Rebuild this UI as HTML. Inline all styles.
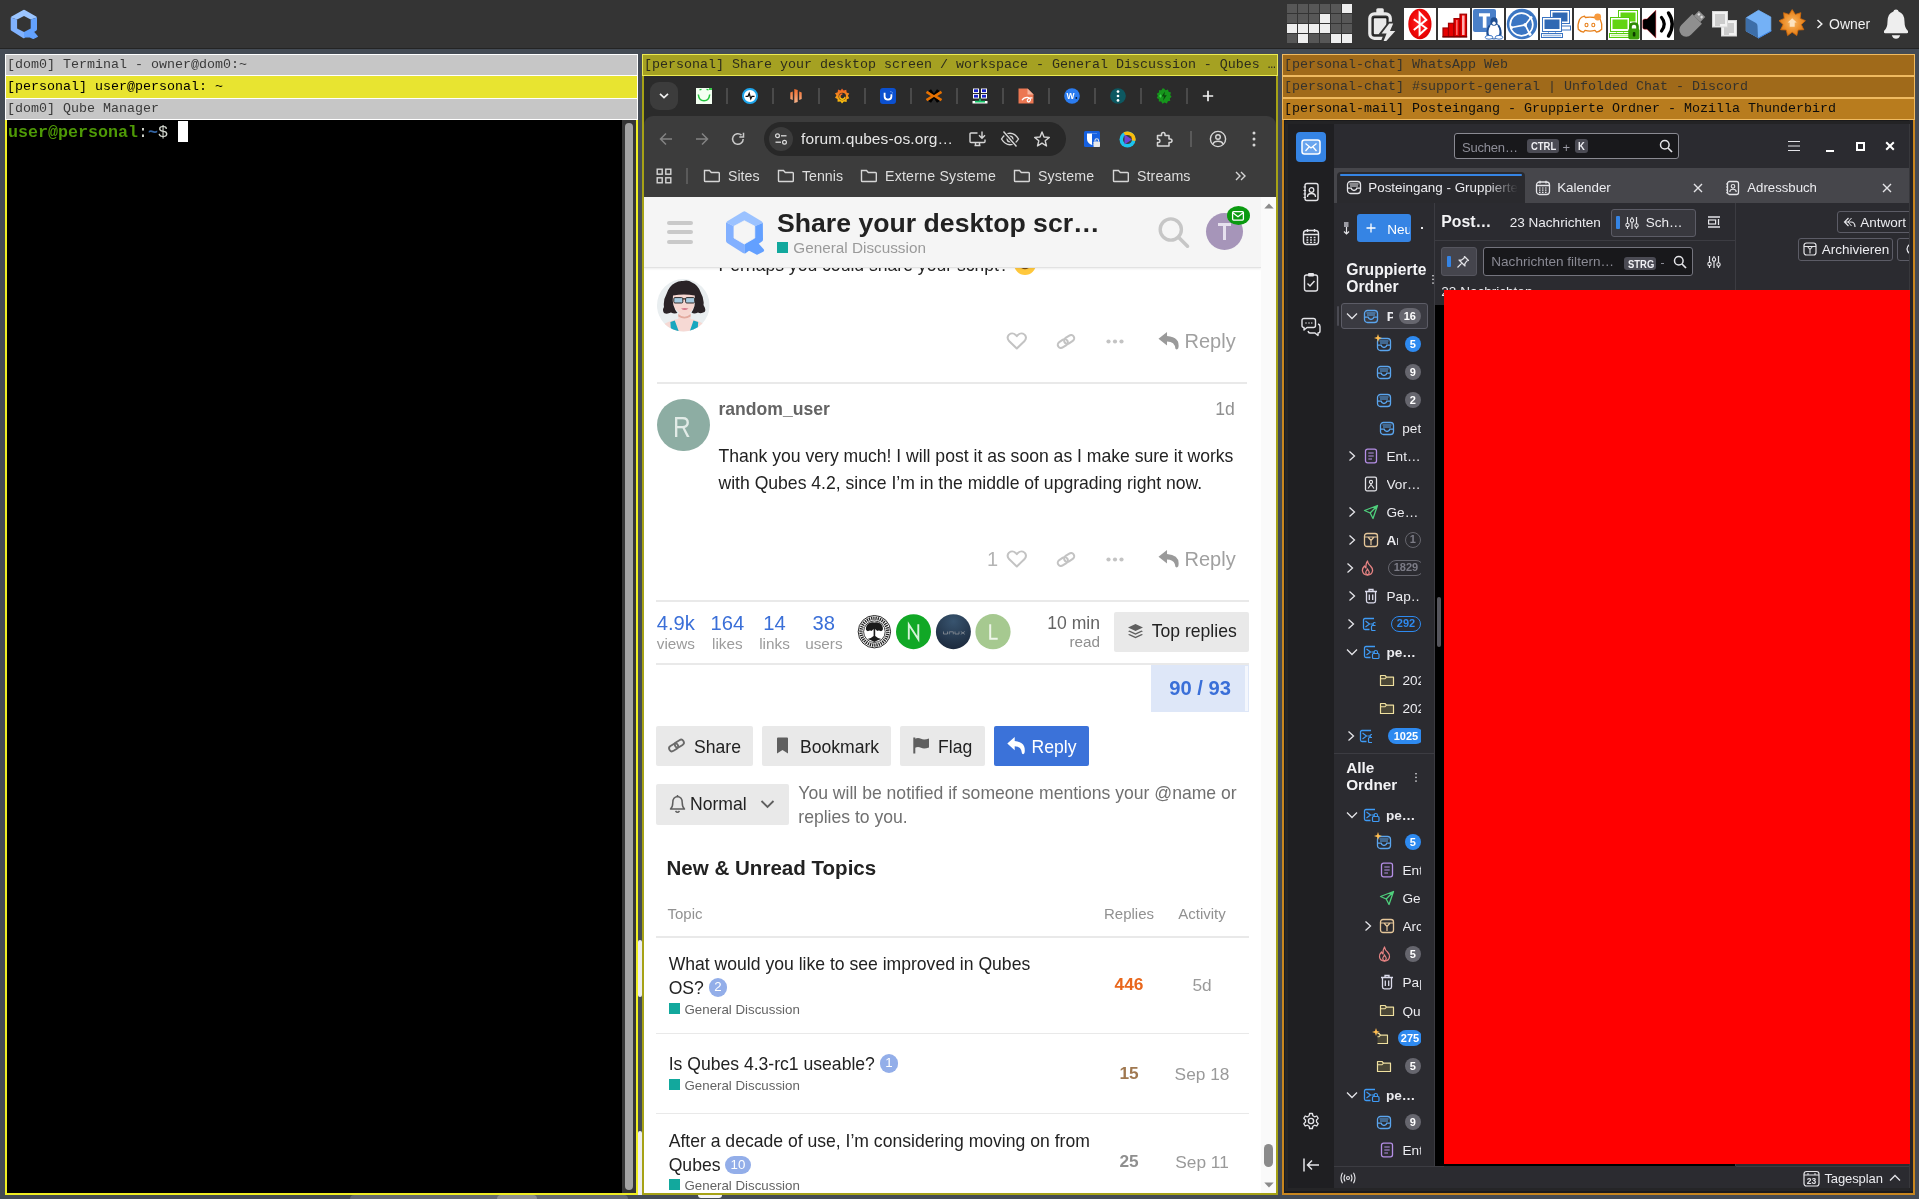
<!DOCTYPE html>
<html><head><meta charset="utf-8"><title>desktop</title>
<style>
*{box-sizing:border-box;margin:0;padding:0}
html,body{width:1919px;height:1199px;overflow:hidden;background:#444b54;font-family:"Liberation Sans",sans-serif}
.abs,.abs *{position:absolute}
.abs{position:absolute}
#panel,#w1,#w2,#w3{will-change:transform}
.mono{font-family:"Liberation Mono",monospace}
.t{white-space:nowrap;line-height:1}
svg{position:absolute;overflow:visible}
/* ---------- top panel ---------- */
#panel{left:0;top:0;width:1919px;height:49px;background:#343434;border-bottom:1px solid #242424}
#grid i{width:10px;height:9px;display:block}
#grid i.d{background:#575757}#grid i.l{background:#eeeeee}
svg.tr{top:8px;width:32px;height:32px}
/* ---------- title bars ---------- */
.tb{position:absolute;height:22px;font-family:"Liberation Mono",monospace;font-size:13.33px;line-height:20px;white-space:nowrap;overflow:hidden;padding-left:1px;border:1px solid #fff}
i.ts{display:block;top:12px;width:1.500px;height:16px;background:#4a4a4a}
svg.fv{top:12px;width:16px;height:16px}
svg.fo{top:93px;width:18px;height:14px}
.bm{top:91px;font-size:14.200px;line-height:18px;color:#dedede}
/* ---------- window 1 ---------- */
#w1{left:5px;top:54px;width:633px;height:1141px}
/* ---------- window 2 ---------- */
#w2{left:642px;top:54px;width:636px;height:1141px}
/* ---------- window 3 ---------- */
#w3{left:1282px;top:54px;width:633px;height:1141px}
</style></head>
<body>
<!-- wallpaper highlights visible in gaps -->
<div class="abs" style="left:638px;top:940px;width:4px;height:57px;background:#ececf0;border-radius:2px"></div>
<div class="abs" style="left:638px;top:1131px;width:4px;height:64px;background:#ececf0;border-radius:2px 2px 0 0"></div>
<div class="abs" style="left:350px;top:1195px;width:278px;height:4px;background:#666b73;border-radius:60px 60px 0 0"></div>
<div class="abs" style="left:497px;top:1195px;width:40px;height:4px;background:#909295;border-radius:14px 14px 0 0"></div>
<div class="abs" style="left:698px;top:1195px;width:24px;height:2.500px;background:#f4f4f6;border-radius:0 0 12px 12px"></div>
<!-- PANEL -->
<div id="panel" class="abs">
<!-- qubes logo -->
<svg style="left:0;top:0" width="48" height="48" viewBox="0 0 48 48">
<defs><mask id="qm" maskUnits="userSpaceOnUse" x="0" y="0" width="48" height="48">
<path d="M24 11.3 L35.400 17.800 L35.400 29.300 L24 35.800 L23.800 36.600 L12.300 29.500 L12.300 17.800 Z" fill="#fff" stroke="#fff" stroke-width="3.2" stroke-linejoin="round"/>
<path d="M33.6 32.200 L37.300 36.500 L33.300 38.500 L29.500 36.600 L25 36.800 L30 31 Z" fill="#fff" stroke="#fff" stroke-width="1.2" stroke-linejoin="round"/>
<path d="M24 16 L30.700 19.400 L30.700 28.500 L24 31.900 L17.100 28.500 L17.100 19.400 Z" fill="#000"/>
</mask></defs>
<g mask="url(#qm)">
<path d="M0 0 H48 V14 L30.700 19.400 L24 23 L17.100 19.400 L0 14 Z" fill="#9bc5ff"/>
<path d="M0 14 L17.100 19.400 L24 23 V48 H0 Z" fill="#80b2ff"/>
<path d="M48 14 L30.700 19.400 L24 23 V48 H48 Z" fill="#63a2ff"/>
</g>
</svg>
<!-- workspace grid -->
<div id="grid" style="left:1287px;top:4px;width:66px;height:40px">
<i class="d" style="left:0;top:0"></i><i class="d" style="left:11px;top:0"></i><i class="d" style="left:22px;top:0"></i><i class="d" style="left:33px;top:0"></i><i class="d" style="left:44px;top:0"></i><i class="l" style="left:55px;top:0"></i>
<i class="d" style="left:0;top:10px"></i><i class="d" style="left:11px;top:10px"></i><i class="d" style="left:22px;top:10px"></i><i class="l" style="left:33px;top:10px"></i><i class="d" style="left:44px;top:10px"></i><i class="d" style="left:55px;top:10px"></i>
<i class="l" style="left:0;top:20px"></i><i class="l" style="left:11px;top:20px"></i><i class="l" style="left:22px;top:20px"></i><i class="l" style="left:33px;top:20px"></i><i class="d" style="left:44px;top:20px"></i><i class="d" style="left:55px;top:20px"></i>
<i class="d" style="left:0;top:30px"></i><i class="l" style="left:11px;top:30px"></i><i class="d" style="left:22px;top:30px"></i><i class="d" style="left:33px;top:30px"></i><i class="l" style="left:44px;top:30px"></i><i class="l" style="left:55px;top:30px"></i>
</div>
<!-- battery -->
<svg style="left:1366px;top:6px" width="32" height="36" viewBox="0 0 32 36">
<rect x="10.3" y="2.300" width="7.5" height="6" rx="1.5" fill="#e9e9e9"/>
<rect x="3.800" y="7.800" width="20.5" height="24.5" rx="4.5" fill="none" stroke="#e9e9e9" stroke-width="3.200"/>
<rect x="6.600" y="11" width="15" height="18.5" rx="1.500" fill="#1c1c1c"/>
<rect x="7.800" y="12.300" width="12.600" height="16" rx="0.800" fill="#e9e9e9"/>
<path d="M23 17 L14 28.500 H19 L16 36 H20.500 L31 24 H25.500 L28.500 17 Z" fill="#343434" stroke="#343434" stroke-width="2.600" stroke-linejoin="round"/>
<path d="M23.200 17.600 L15.600 27.500 H20.600 L17.600 35 H20.300 L29.300 25 H24 L27.200 17.600 Z" fill="#e9e9e9"/>
</svg>
<!-- tray: bluetooth -->
<svg class="tr" style="left:1404px" viewBox="0 0 32 32"><rect width="32" height="32" fill="#fff"/>
<defs><radialGradient id="btg" cx="0.5" cy="0.45" r="0.6"><stop offset="0" stop-color="#ff2a2a"/><stop offset="0.7" stop-color="#ee0606"/><stop offset="1" stop-color="#d40000"/></radialGradient></defs>
<ellipse cx="15.900" cy="16" rx="11.600" ry="15.300" fill="url(#btg)"/>
<path d="M9.800 11.300 L22.300 20.300 L15.600 26.500 V4.800 L22.300 11.800 L9.800 22" fill="none" stroke="#fff" stroke-width="2"/>
</svg>
<!-- tray: signal -->
<svg class="tr" style="left:1438px" viewBox="0 0 32 32"><rect width="32" height="32" fill="#fff"/>
<defs><linearGradient id="sg" x1="0" x2="1"><stop offset="0" stop-color="#ff1a1a"/><stop offset="0.55" stop-color="#ff8a8a"/><stop offset="1" stop-color="#d80000"/></linearGradient></defs>
<g fill="#e60000" stroke="#a00000" stroke-width="1.200"><rect x="5" y="20" width="5.500" height="8.500"/><rect x="10.500" y="15.300" width="5.500" height="13.200"/><rect x="16" y="10.600" width="6" height="17.900"/><rect x="22" y="6.200" width="6.500" height="22.300"/></g>
<rect x="24" y="7.500" width="2.600" height="19.500" fill="#ffb0b0"/><rect x="18" y="12" width="1.600" height="15" fill="#ff6a6a"/>
<rect x="4.400" y="28.300" width="24.800" height="1.300" fill="#700000"/>
</svg>
<!-- tray: teams -->
<svg class="tr" style="left:1472px" viewBox="0 0 32 32"><rect width="32" height="32" fill="#fff"/>
<rect x="1" y="1" width="23" height="23" rx="2" fill="#4a80c9"/>
<path d="M7 5.200 H18 V8.400 H14.500 V19.800 H10.800 V8.400 H7 Z" fill="#fff"/>
<ellipse cx="22" cy="23" rx="6.300" ry="8" fill="#fff" stroke="#2a5fa8" stroke-width="1.200"/>
<ellipse cx="22" cy="13.500" rx="3.600" ry="4.300" fill="#1f4f93"/>
<ellipse cx="22" cy="15.200" rx="1.700" ry="1.800" fill="#fff"/>
<path d="M17.600 17.500 Q14.500 22 15.500 27.500 M26.400 17.500 Q29.500 22 28.500 27.500" stroke="#1f4f93" stroke-width="1.800" fill="none"/>
<ellipse cx="17" cy="29.300" rx="3.800" ry="1.900" fill="#fff" stroke="#3b74c4" stroke-width="1"/>
<ellipse cx="27" cy="29.300" rx="3.800" ry="1.900" fill="#fff" stroke="#3b74c4" stroke-width="1"/>
</svg>
<!-- tray: syncthing -->
<svg class="tr" style="left:1506px" viewBox="0 0 32 32"><rect width="32" height="32" fill="#fff"/>
<circle cx="16" cy="16" r="15.200" fill="#3b76c3"/>
<circle cx="15.500" cy="16.500" r="11.300" fill="none" stroke="#fff" stroke-width="1.700"/>
<path d="M19.200 16.900 L25 9.500 M19.200 16.900 L5.500 19.500 M19.200 16.900 L24 26.500" stroke="#fff" stroke-width="1.700" fill="none"/>
<circle cx="19.200" cy="16.900" r="1.800" fill="#fff"/><circle cx="25" cy="9.600" r="1.500" fill="#fff"/><circle cx="5.500" cy="19.500" r="1.500" fill="#fff"/><circle cx="24" cy="26.300" r="1.500" fill="#fff"/>
</svg>
<!-- tray: computers blue -->
<svg class="tr" style="left:1540px" viewBox="0 0 32 32"><rect width="32" height="32" fill="#fff"/>
<g stroke="#3a74c2" stroke-width="1" fill="#fff"><rect x="10.500" y="2.500" width="19" height="13"/><rect x="21.500" y="18" width="9" height="4"/></g><rect x="12.500" y="4.500" width="15" height="9" fill="#2f68b3"/>
<g stroke="#3a74c2" stroke-width="1" fill="#fff"><rect x="2.500" y="9.500" width="19" height="14"/><rect x="1.500" y="25.500" width="21" height="4"/><rect x="9" y="23.500" width="6" height="2"/></g>
<rect x="4.500" y="11.500" width="15" height="9.500" fill="#2f68b3"/>
<path d="M3 27.500 H21" stroke="#9dbce4" stroke-width="1.600"/>
</svg>
<!-- tray: discord -->
<svg class="tr" style="left:1574px" viewBox="0 0 32 32"><rect width="32" height="32" fill="#fff"/>
<path d="M10.500 8.200 Q7 9 5.500 11.500 Q3.300 17 4.300 21.300 Q6.500 23.800 9.500 24.200 L11 22.300 Q16 23.800 21 22.300 L22.500 24.200 Q25.500 23.800 27.700 21.300 Q28.500 16 26.300 11.500 Q24.800 9 21.500 8.200 L20.700 9.500 Q16 8.700 11.300 9.500 Z" fill="#fff" stroke="#e8801a" stroke-width="1.300" stroke-linejoin="round"/>
<ellipse cx="12.500" cy="17" rx="1.500" ry="1.800" fill="#fff" stroke="#e8801a" stroke-width="1.100"/><ellipse cx="19.300" cy="17" rx="1.500" ry="1.800" fill="#fff" stroke="#e8801a" stroke-width="1.100"/>
<circle cx="23.700" cy="9" r="3.400" fill="#f79a3e"/>
</svg>
<!-- tray: computers green + lock -->
<svg class="tr" style="left:1608px" viewBox="0 0 32 32"><rect width="32" height="32" fill="#fff"/>
<g stroke="#55cc0c" stroke-width="1" fill="#fff"><rect x="10.500" y="2.500" width="19" height="13"/></g><rect x="12.500" y="4.500" width="15" height="9" fill="#62d412"/>
<g stroke="#55cc0c" stroke-width="1" fill="#fff"><rect x="2.500" y="9.500" width="19" height="14"/><rect x="1.500" y="25.500" width="21" height="4"/><rect x="9" y="23.500" width="6" height="2"/></g>
<rect x="4.500" y="11.500" width="15" height="9.500" fill="#62d412"/>
<path d="M3 27.500 H21" stroke="#bdf08e" stroke-width="1.600"/>
<path d="M22.500 21 V18.500 Q22.500 15.500 26 15.500 Q29.500 15.500 29.500 18.500 V21" fill="none" stroke="#2e8a05" stroke-width="2.600"/>
<rect x="20.300" y="20.500" width="11.200" height="11" rx="2" fill="#3c9f0b"/><rect x="24.800" y="24" width="2.600" height="4.500" rx="1" fill="#0e3a00"/>
</svg>
<!-- tray: volume -->
<svg class="tr" style="left:1642px" viewBox="0 0 32 32"><rect width="32" height="32" fill="#fff"/>
<path d="M0.800 12.500 Q0.800 11 3 11 H5 L13.800 2.300 V30 L5 21.300 H3 Q0.800 21.300 0.800 19.800 Z" fill="#000" stroke="#e00010" stroke-width="0.400"/>
<path d="M19.500 9.500 Q25 16 19.500 23" fill="none" stroke="#000" stroke-width="3.200" stroke-linecap="round"/>
<path d="M26.500 5 Q34 16 26.500 28" fill="none" stroke="#000" stroke-width="3.400" stroke-linecap="round"/>
</svg>
<!-- usb -->
<svg style="left:1676px;top:10px" width="30" height="32" viewBox="0 0 30 32">
<g transform="rotate(45 13 17)"><rect x="8.500" y="-1.500" width="9" height="7" fill="#8f8f8f"/><rect x="10" y="0" width="2.200" height="2.200" fill="#dcdcdc"/><rect x="13.800" y="0" width="2.200" height="2.200" fill="#dcdcdc"/>
<path d="M6.200 5.500 H19.800 V21 A6.800 6.800 0 0 1 6.200 21 Z" fill="#8f8f8f"/></g>
</svg>
<!-- docs -->
<svg style="left:1711px;top:10px" width="28" height="28" viewBox="0 0 28 28">
<rect x="10.500" y="10.500" width="15" height="15.500" fill="#f2f2f2" stroke="#d6d6d6"/><path d="M13 14h10M13 16h10M13 18h10M13 20h10M13 22h10M13 24h5" stroke="#a6a6a6" stroke-width="1"/>
<rect x="1.500" y="1.500" width="15" height="15.500" fill="#f2f2f2" stroke="#d6d6d6"/><path d="M4 5h10M4 7h10M4 9h10M4 11h10M4 13h10M4 15h5" stroke="#a6a6a6" stroke-width="1"/>
</svg>
<!-- blue cube -->
<svg style="left:1744px;top:8px" width="30" height="32" viewBox="0 0 30 32">
<path d="M14.500 2.300 L26.800 9 V23 L14.500 29.800 L2.200 23 V9.800 Z" fill="#74b1f6" stroke="#74b1f6" stroke-width="0.800" stroke-linejoin="round"/>
<path d="M2 9.600 L12 15 Q13.500 16 13.500 18 L14 30 L2 23.200 Z" fill="#3d6ea8"/>
<path d="M14 30.200 L27.500 22.800" stroke="#3f86e6" stroke-width="1" fill="none"/>
</svg>
<!-- orange star -->
<svg style="left:1778px;top:8px" width="30" height="32" viewBox="0 0 30 32">
<defs><radialGradient id="og" cx="0.5" cy="0.5" r="0.5"><stop offset="0" stop-color="#f9b968"/><stop offset="0.6" stop-color="#ee9330"/><stop offset="1" stop-color="#e17c16"/></radialGradient></defs>
<path id="star" fill="url(#og)" stroke="#d2690a" stroke-width="0.800" stroke-linejoin="round" d="M14.2 1.6 L17.3 6.4 L22.8 4.7 L22.2 10.4 L27.4 12.7 L23.3 16.6 L25.8 21.7 L20.1 22.0 L18.8 27.6 L14.2 24.2 L9.6 27.6 L8.3 22.0 L2.6 21.7 L5.1 16.6 L1.0 12.7 L6.2 10.4 L5.6 4.7 L11.1 6.4 Z"/>
<path d="M14.200 10.300 L18.700 14.600 H16.700 V18.800 H11.700 V14.600 H9.700 Z" fill="#fde3bf"/>
</svg>
<!-- owner -->
<svg style="left:1816px;top:19px" width="8" height="10" viewBox="0 0 8 10"><path d="M1.500 1 L5.800 5 L1.500 9" fill="none" stroke="#f0f0f0" stroke-width="1.500"/></svg>
<div class="t" style="left:1829px;top:16px;font-size:14px;color:#f0f0f0;line-height:16px">Owner</div>
<!-- bell -->
<svg style="left:1882px;top:8px" width="28" height="32" viewBox="0 0 28 32">
<path d="M14 1.500 Q16.300 1.500 16.600 3.500 Q22.500 5.500 22.500 13.500 Q22.500 20 26 23 Q26.500 25.300 25 25.300 H3 Q1.500 25.300 2 23 Q5.500 20 5.500 13.500 Q5.500 5.500 11.400 3.500 Q11.700 1.500 14 1.500 Z" fill="#eeeeee"/>
<path d="M9.800 27.300 H18.200 Q17 30.800 14 30.800 Q11 30.800 9.800 27.300 Z" fill="#eeeeee"/>
</svg>

</div>
<!-- WINDOW 1 : terminal -->
<div id="w1" class="abs">
<div class="tb" style="left:0;top:0;width:633px;background:#c6c6c6;color:#3a3a3a">[dom0] Terminal - owner@dom0:~</div>
<div class="tb" style="left:0;top:21px;width:633px;height:24px;line-height:22px;background:#e8e430;color:#000;z-index:2">[personal] user@personal: ~</div>
<div class="tb" style="left:0;top:44px;width:633px;background:#c6c6c6;color:#3a3a3a">[dom0] Qube Manager</div>
<div style="left:0;top:66px;width:633px;height:1075px;background:#000;border:2px solid #f0ee22;border-top:none"></div>
<div style="left:617px;top:66px;width:14px;height:1073px;background:#353535"></div>
<div style="left:620px;top:69px;width:8px;height:1067px;background:#a3a3a3;border-radius:4px"></div>
<div class="mono t" style="left:3px;top:70px;font-size:16.67px;font-weight:700;line-height:18px;color:#4e9a06">user@personal<span style="position:static;color:#d3d7cf;font-weight:400">:</span><span style="position:static;color:#3465a4">~</span><span style="position:static;color:#d3d7cf;font-weight:400">$</span></div>
<div style="left:173px;top:67px;width:10px;height:21px;background:#fff"></div>
</div>
<!-- WINDOW 2 : browser -->
<div id="w2" class="abs">
<div class="tb" style="left:0;top:0;width:636px;background:#a5a122;border-color:#ecea52;color:#2c2c1c">[personal] Share your desktop screen / workspace - General Discussion - Qubes …</div>
<div style="left:0;top:22px;width:636px;height:1119px;background:#fff;border:2px solid #a6a216;border-top:none"></div>
<!-- chrome: coordinates relative to w2 (642,54) -->
<div id="chrome" style="left:2px;top:22px;width:632px;height:121px;background:#2b2b2b">
 <div style="left:0;top:40px;width:632px;height:81px;background:#3c3c3c;border-radius:9px 9px 0 0"></div>
 <!-- tab search button -->
 <div style="left:6px;top:6px;width:28px;height:28px;border-radius:9px;background:#3c3c3c"></div>
 <svg style="left:14px;top:15px" width="12" height="10" viewBox="0 0 12 10"><path d="M2 2.800 L6 6.600 L10 2.800" fill="none" stroke="#f1f1f1" stroke-width="1.700"/></svg>
 <!-- tab separators -->
 <i class="ts" style="left:82px"></i><i class="ts" style="left:128px"></i><i class="ts" style="left:174px"></i><i class="ts" style="left:220px"></i><i class="ts" style="left:266px"></i><i class="ts" style="left:312px"></i><i class="ts" style="left:358px"></i><i class="ts" style="left:404px"></i><i class="ts" style="left:450px"></i><i class="ts" style="left:496px"></i><i class="ts" style="left:542px"></i>
 <!-- favicons (16x16) top=12 -->
 <svg class="fv" style="left:52px" viewBox="0 0 16 16"><rect width="16" height="16" fill="#f3fff1"/><path d="M2.300 6.500 Q3 12.800 8 12.800 Q13 12.800 13.700 6.500" fill="none" stroke="#22c43c" stroke-width="1.500"/><path d="M3.500 1.800 L5.500 1.300 M12.500 1.800 L10.500 1.300" stroke="#22c43c" stroke-width="1.200"/><rect x="13" y="0" width="3" height="2" fill="#3fd04f"/></svg>
 <svg class="fv" style="left:98px" viewBox="0 0 16 16"><circle cx="8" cy="8" r="7" fill="#fff" stroke="#1ea7ee" stroke-width="2"/><path d="M3.500 8.300 H6 L7.200 5.500 L8.800 10.800 L10 8.300 H12.500" fill="none" stroke="#111" stroke-width="1.300"/></svg>
 <svg class="fv" style="left:144px" viewBox="0 0 16 16"><defs><linearGradient id="ob" x1="0" y1="0" x2="0" y2="1"><stop offset="0" stop-color="#f06a2a"/><stop offset="1" stop-color="#f6b48c"/></linearGradient></defs><path d="M2.300 4.500 L4.800 3.500 V12 L2.300 11 Z M6.300 1 L9.700 2 V14 L6.300 15 Z M11.200 3.500 L13.700 4.500 V11 L11.200 12 Z" fill="url(#ob)"/></svg>
 <svg class="fv" style="left:190px" viewBox="0 0 16 16"><defs><linearGradient id="gf" x1="0" y1="1" x2="0" y2="0"><stop offset="0" stop-color="#fbca0a"/><stop offset="1" stop-color="#f05a28"/></linearGradient></defs><path d="M8 0.500 L9.600 2.600 L12.300 1.800 L12.600 4.500 L15.300 5.500 L13.900 7.800 L15.300 10.200 L12.800 11.300 L12.600 14 L9.900 13.600 L8 15.600 L6.500 13.400 L3.600 13.800 L3.500 11 L1 9.800 L2.400 7.500 L1 5.200 L3.700 4.300 L4 1.600 L6.600 2.500 Z" fill="url(#gf)"/><circle cx="8.300" cy="8.500" r="3.700" fill="#2b2b2b"/><path d="M8.400 6 A2.600 2.600 0 1 0 11 8.800" fill="none" stroke="url(#gf)" stroke-width="1.500"/></svg>
 <svg class="fv" style="left:236px" viewBox="0 0 16 16"><rect width="16" height="16" rx="3" fill="#0b50d0"/><path d="M4.600 4.800 V8.600 Q4.600 11.600 8 11.600 Q11.400 11.600 11.400 8.600 V6.300" fill="none" stroke="#fff" stroke-width="1.800"/><rect x="10.400" y="3.200" width="1" height="1" fill="#9cc0ff"/><rect x="11.800" y="4.400" width="1" height="1" fill="#9cc0ff"/></svg>
 <svg class="fv" style="left:282px" viewBox="0 0 16 16"><path d="M3.800 2 L12.200 14 M12.200 2 L3.800 14" stroke="#000" stroke-width="3"/><path d="M0.500 3.800 L7 8 L0.500 12.200 M15.500 3.800 L9 8 L15.500 12.200" fill="none" stroke="#e57000" stroke-width="2.600"/></svg>
 <svg class="fv" style="left:328px" viewBox="0 0 16 16"><g fill="#fff"><rect x="1" y="0.500" width="6" height="4.500"/><rect x="9" y="0.500" width="6" height="4.500"/><rect x="1" y="6" width="6" height="4.500"/><rect x="9" y="6" width="6" height="4.500"/><rect x="0.500" y="13" width="15" height="2.500"/></g><g fill="#1822c8"><rect x="2" y="1.300" width="4" height="2.800"/><rect x="10" y="1.300" width="4" height="2.800"/><rect x="2" y="6.800" width="4" height="2.800"/><rect x="10" y="6.800" width="4" height="2.800"/></g><path d="M8 10.500 V13.500 M3 13.600 H13" stroke="#17c76b" stroke-width="1.600"/></svg>
 <svg class="fv" style="left:374px" viewBox="0 0 16 16"><path d="M0.500 0.500 H9.500 L15.500 6.500 V15.500 H0.500 Z" fill="#ec7752"/><path d="M9.500 0.500 L15.500 6.500 H9.500 Z" fill="#f6b39b"/><path d="M4 12.300 Q6 9 9.500 9.300 Q13 9.800 12.300 12.300 Q11.500 14.500 9.800 13.600 Q8.500 12.500 10.200 10.800 Q11.800 9.500 14.500 10" fill="none" stroke="#fff" stroke-width="1.200"/></svg>
 <svg class="fv" style="left:420px" viewBox="0 0 16 16"><circle cx="8" cy="8" r="7.800" fill="#2b7cf0"/><text x="2.500" y="11" font-family="Liberation Sans" font-weight="700" font-size="8.500" fill="#fff">W</text><circle cx="12.300" cy="10" r="0.900" fill="#0b1a33"/></svg>
 <svg class="fv" style="left:466px" viewBox="0 0 16 16"><circle cx="8" cy="8" r="7.800" fill="#0d5861"/><circle cx="8" cy="3.600" r="1.350" fill="#fff"/><circle cx="8" cy="8" r="1.350" fill="#fff"/><circle cx="8" cy="12.400" r="1.350" fill="#fff"/></svg>
 <svg class="fv" style="left:512px" viewBox="0 0 16 16"><path d="M8 0.500 L9.600 2.200 L12 1.500 L12.600 3.800 L15 4.600 L14.200 7 L15.600 8.800 L13.800 10.400 L14.300 12.800 L11.900 13.200 L10.900 15.400 L8.600 14.500 L6.500 15.700 L5.200 13.600 L2.800 13.500 L2.800 11.100 L0.700 9.900 L1.900 7.800 L0.700 5.700 L2.900 4.600 L3 2.200 L5.400 2.300 L6.700 0.300 Z" fill="#16961c"/><path d="M9 3.500 L5.500 8.500 H8 L7 12.800 L10.800 7.300 H8.300 Z" fill="#0a4a0d"/><path d="M3 8 H6 M4.500 6.500 V9.500" stroke="#3ad34a" stroke-width="1"/></svg>
 <svg style="left:558px;top:14px" width="12" height="12" viewBox="0 0 12 12"><path d="M6 0.800 V11.200 M0.800 6 H11.200" stroke="#f1f1f1" stroke-width="1.700"/></svg>
 <!-- nav buttons -->
 <svg style="left:14px;top:55px" width="16" height="16" viewBox="0 0 16 16"><path d="M14 8 H2.500 M8 2.500 L2.500 8 L8 13.500" fill="none" stroke="#838383" stroke-width="1.500"/></svg>
 <svg style="left:50px;top:55px" width="16" height="16" viewBox="0 0 16 16"><path d="M2 8 H13.500 M8 2.500 L13.500 8 L8 13.500" fill="none" stroke="#838383" stroke-width="1.500"/></svg>
 <svg style="left:86px;top:55px" width="16" height="16" viewBox="0 0 16 16"><path d="M13.200 8 A5.300 5.300 0 1 1 11.500 4.100" fill="none" stroke="#c9c9c9" stroke-width="1.500"/><path d="M13.500 1.800 V6 H9.300" fill="none" stroke="#c9c9c9" stroke-width="1.500"/></svg>
 <!-- url pill -->
 <div style="left:120px;top:46px;width:302px;height:34px;border-radius:17px;background:#282828"></div>
 <div style="left:125px;top:51px;width:24px;height:24px;border-radius:12px;background:#3c3c3c"></div>
 <svg style="left:130px;top:56px" width="14" height="14" viewBox="0 0 14 14"><circle cx="3.500" cy="3.800" r="1.900" fill="none" stroke="#dcdcdc" stroke-width="1.200"/><path d="M7 3.800 H12.500" stroke="#dcdcdc" stroke-width="1.300"/><circle cx="10.500" cy="10.200" r="1.900" fill="none" stroke="#dcdcdc" stroke-width="1.200"/><path d="M1.500 10.200 H7" stroke="#dcdcdc" stroke-width="1.300"/></svg>
 <div class="t" style="left:157px;top:54px;font-size:15.500px;letter-spacing:.12px;color:#e6e6e6;line-height:18px">forum.qubes-os.org…</div>
 <svg style="left:324px;top:54px" width="20" height="18" viewBox="0 0 20 18"><path d="M9.500 3 H3 Q2 3 2 4 V11.500 Q2 12.500 3 12.500 H16 Q17 12.500 17 11.500 V9.500 M6.500 15.500 H12.500 M7.500 12.500 V15.500 M11.500 12.500 V15.500" fill="none" stroke="#d6d6d6" stroke-width="1.400"/><path d="M14 1.500 V8 M11 5.200 L14 8.200 L17 5.200" fill="none" stroke="#d6d6d6" stroke-width="1.400"/></svg>
 <svg style="left:356px;top:54px" width="20" height="18" viewBox="0 0 20 18"><path d="M1.500 9 Q5 3.300 10 3.300 Q15 3.300 18.500 9 Q15 14.700 10 14.700 Q5 14.700 1.500 9 Z" fill="none" stroke="#d6d6d6" stroke-width="1.400"/><circle cx="10" cy="9" r="2.800" fill="none" stroke="#d6d6d6" stroke-width="1.400"/><path d="M3 1.500 L17 16.500" stroke="#282828" stroke-width="3.600"/><path d="M3.500 1.500 L16.500 16.500" stroke="#d6d6d6" stroke-width="1.400"/></svg>
 <svg style="left:389px;top:54px" width="18" height="18" viewBox="0 0 18 18"><path d="M9 2 L11 7 L16.300 7.400 L12.200 10.800 L13.500 16 L9 13.200 L4.500 16 L5.800 10.800 L1.700 7.400 L7 7 Z" fill="none" stroke="#d6d6d6" stroke-width="1.400" stroke-linejoin="round"/></svg>
 <!-- extensions -->
 <svg style="left:440px;top:55px" width="17" height="17" viewBox="0 0 17 17"><rect width="16" height="16" rx="1.500" fill="#1560e0"/><path d="M3 2.500 H13 V8 Q13 12 8 14 Q3 12 3 8 Z" fill="#fff"/><path d="M8 2.500 H13 V8 Q13 12 8 14 Z" fill="#1560e0"/><rect x="9.500" y="10.500" width="6.500" height="5.500" rx="0.800" fill="#e9e9e9"/><path d="M11 10.500 V9.300 Q11 7.800 12.700 7.800 Q14.500 7.800 14.500 9.300 V10.500" fill="none" stroke="#e9e9e9" stroke-width="1.100"/></svg>
 <svg style="left:475px;top:55px" width="18" height="17" viewBox="0 0 18 17"><circle cx="8.500" cy="8.500" r="8" fill="#1cc4ee"/><path d="M8.500 8.500 L4.500 1.600 A8 8 0 0 1 16.400 10 Z" fill="#fbbc0b"/><circle cx="8.500" cy="8.500" r="4.500" fill="#3c3c3c"/><path d="M5.500 3.500 L13 8.500 L5.500 13.500 Z" fill="#6f42d6"/></svg>
 <svg style="left:511px;top:54px" width="18" height="18" viewBox="0 0 18 18"><path d="M2.500 5.500 H6.500 V4.500 Q6.500 2.500 8.300 2.500 Q10 2.500 10 4.500 V5.500 H14 V9 H15 Q17 9 17 10.800 Q17 12.500 15 12.500 H14 V16 H2.500 V12.600 H3.300 Q5 12.600 5 10.900 Q5 9.200 3.300 9.200 H2.500 Z" fill="none" stroke="#d6d6d6" stroke-width="1.500" stroke-linejoin="round"/></svg>
 <div style="left:546px;top:55px;width:1.500px;height:16px;background:#5a5a5a"></div>
 <svg style="left:565px;top:54px" width="18" height="18" viewBox="0 0 18 18"><circle cx="9" cy="9" r="7.600" fill="none" stroke="#d6d6d6" stroke-width="1.400"/><circle cx="9" cy="7" r="2.300" fill="none" stroke="#d6d6d6" stroke-width="1.400"/><path d="M3.800 14.200 Q5 11.300 9 11.300 Q13 11.300 14.200 14.200" fill="none" stroke="#d6d6d6" stroke-width="1.400"/></svg>
 <svg style="left:606.700px;top:54px" width="6" height="18" viewBox="0 0 6 18"><circle cx="3" cy="3" r="1.500" fill="#d6d6d6"/><circle cx="3" cy="9" r="1.500" fill="#d6d6d6"/><circle cx="3" cy="15" r="1.500" fill="#d6d6d6"/></svg>
 <!-- bookmarks bar -->
 <svg style="left:12px;top:92px" width="16" height="16" viewBox="0 0 16 16"><g fill="none" stroke="#d6d6d6" stroke-width="1.400"><rect x="1.200" y="1.200" width="5" height="5"/><rect x="9.800" y="1.200" width="5" height="5"/><rect x="1.200" y="9.800" width="5" height="5"/><rect x="9.800" y="9.800" width="5" height="5"/></g></svg>
 <div style="left:42px;top:92px;width:1.500px;height:16px;background:#5a5a5a"></div>
 <svg class="fo" style="left:59.300px" viewBox="0 0 18 14"><path d="M1.500 1.500 H6.500 L8.300 3.500 H15.500 Q16.300 3.500 16.300 4.300 V11.700 Q16.300 12.500 15.500 12.500 H2.300 Q1.500 12.500 1.500 11.700 Z" fill="none" stroke="#d6d6d6" stroke-width="1.400"/></svg>
 <div class="t bm" style="left:84px">Sites</div>
 <svg class="fo" style="left:133.300px" viewBox="0 0 18 14"><path d="M1.500 1.500 H6.500 L8.300 3.500 H15.500 Q16.300 3.500 16.300 4.300 V11.700 Q16.300 12.500 15.500 12.500 H2.300 Q1.500 12.500 1.500 11.700 Z" fill="none" stroke="#d6d6d6" stroke-width="1.400"/></svg>
 <div class="t bm" style="left:158px">Tennis</div>
 <svg class="fo" style="left:216.300px" viewBox="0 0 18 14"><path d="M1.500 1.500 H6.500 L8.300 3.500 H15.500 Q16.300 3.500 16.300 4.300 V11.700 Q16.300 12.500 15.500 12.500 H2.300 Q1.500 12.500 1.500 11.700 Z" fill="none" stroke="#d6d6d6" stroke-width="1.400"/></svg>
 <div class="t bm" style="left:241px;letter-spacing:.2px">Externe Systeme</div>
 <svg class="fo" style="left:369.300px" viewBox="0 0 18 14"><path d="M1.500 1.500 H6.500 L8.300 3.500 H15.500 Q16.300 3.500 16.300 4.300 V11.700 Q16.300 12.500 15.500 12.500 H2.300 Q1.500 12.500 1.500 11.700 Z" fill="none" stroke="#d6d6d6" stroke-width="1.400"/></svg>
 <div class="t bm" style="left:394px;letter-spacing:.15px">Systeme</div>
 <svg class="fo" style="left:468.300px" viewBox="0 0 18 14"><path d="M1.500 1.500 H6.500 L8.300 3.500 H15.500 Q16.300 3.500 16.300 4.300 V11.700 Q16.300 12.500 15.500 12.500 H2.300 Q1.500 12.500 1.500 11.700 Z" fill="none" stroke="#d6d6d6" stroke-width="1.400"/></svg>
 <div class="t bm" style="left:493px;letter-spacing:.1px">Streams</div>
 <svg style="left:590.500px;top:95px" width="11" height="10" viewBox="0 0 11 10"><path d="M1 1 L5 5 L1 9 M6 1 L10 5 L6 9" fill="none" stroke="#d6d6d6" stroke-width="1.400"/></svg>
</div>

<div id="page" style="left:2px;top:143px;width:632px;height:996px;background:#fff;overflow:hidden">
<div class="t" style="left:74.50px;top:60.12px;font-size:17.58px;color:#222;font-weight:400;">Perhaps you could share your script?</div>
<svg style="left:369.00px;top:55.00px;" width="24" height="24" viewBox="0 0 24 24"><circle cx="12" cy="12" r="11" fill="#ffc83d"/><path d="M6 13 Q12 20 18 13" fill="none" stroke="#7a4b10" stroke-width="1.6"/><circle cx="8" cy="9" r="1.5" fill="#5b3a0c"/><circle cx="16" cy="9" r="1.5" fill="#5b3a0c"/></svg>
<svg style="left:13.2px;top:82.2px" width="52.6" height="52.6" viewBox="0 0 52.6 52.6"><defs><clipPath id="avc"><circle cx="26.3" cy="26.3" r="26.3"/></clipPath></defs><g clip-path="url(#avc)"><rect width="52.6" height="52.6" fill="#e9eef0"/><path d="M8 44.500 Q16 40.500 21.300 40 L21.300 34 H33.600 V40 Q39 40.500 46 44.500 L50 54 H3 Z" fill="#f6d9d4"/><path d="M21.300 35 Q27.500 40.500 33.600 35 V37.500 Q27.500 41.500 21.300 37.500 Z" fill="#e3aa9e"/><path d="M13.400 43 L17.800 41.500 L22 53 H14 Z M36.500 41.500 L41.200 43 L40.500 53 H32.500 Z" fill="#18a7bf"/><path d="M15.800 14 H37.700 V24 Q37 30 33 33.500 Q27.500 38.500 22 33.500 Q16.500 29 15.800 24 Z" fill="#f6d6d0"/><path d="M26 2 Q31 0.500 35 3.500 Q41 6 43.500 13 Q47.500 20 46.500 26 Q49.500 31 47.500 33 Q44 35 41 33.500 Q37 35.500 34.500 33.500 Q38.500 28 38 20 L37.700 16.500 Q27 14.500 16 16.500 L15.800 21 Q15.500 28 20.500 34 Q17 35 14 33.500 Q10 35.500 7 34 Q5 31 7 28 Q6 21 9.500 15 Q12 7 18 4 Q22 1.500 26 2 Z" fill="#2a2327"/><rect x="16.800" y="18.600" width="9" height="5.400" rx="1.200" fill="#a6cbe0" stroke="#2f2a2a" stroke-width="1"/><rect x="28.600" y="18.600" width="9" height="5.400" rx="1.200" fill="#a6cbe0" stroke="#2f2a2a" stroke-width="1"/><path d="M25.800 19.800 H28.600" stroke="#2f2a2a" stroke-width="1.200"/><path d="M24 29.500 Q27.700 28.300 31.500 29.500 Q27.700 32.500 24 29.500 Z" fill="#d4788a"/></g></svg>
<svg style="left:362.20px;top:134.40px;" width="21.6" height="19" viewBox="0 0 20 19" preserveAspectRatio="none"><path d="M10 17.500 L2.800 10 Q0.200 6.500 2.800 3.600 Q6 1 9 4 L10 5.200 L11 4 Q14 1 17.200 3.600 Q19.800 6.500 17.200 10 Z" fill="none" stroke="#c3c3c3" stroke-width="1.850" stroke-linejoin="round"/></svg>
<svg style="left:412.00px;top:134.80px;" width="20" height="19" viewBox="0 0 20 19"><g transform="rotate(-33 10 9.5)" fill="none" stroke="#c3c3c3" stroke-width="2"><rect x="0.800" y="6.300" width="10.800" height="6.400" rx="3.200"/><rect x="8.400" y="6.300" width="10.800" height="6.400" rx="3.200"/></g></svg>
<svg style="left:462.00px;top:141.80px;" width="18" height="5" viewBox="0 0 18 5"><circle cx="2.500" cy="2.500" r="2.100" fill="#c3c3c3"/><circle cx="9" cy="2.500" r="2.100" fill="#c3c3c3"/><circle cx="15.500" cy="2.500" r="2.100" fill="#c3c3c3"/></svg>
<svg style="left:512.70px;top:134.00px;" width="24.2" height="20.4" viewBox="0 0 21 20" preserveAspectRatio="none"><path d="M8.200 1 L0.800 7.600 L8.200 14.200 V10.300 Q15 10.300 15.500 17.500 Q17 19 18 17 Q20 6 8.200 4.900 Z" fill="#9a9a9a" transform="translate(0.5 0)"/></svg>
<div class="t" style="left:540.50px;top:134.37px;font-size:20px;color:#a0a0a0;font-weight:400;">Reply</div>
<svg style="left:362.20px;top:352.10px;" width="21.6" height="19" viewBox="0 0 20 19" preserveAspectRatio="none"><path d="M10 17.500 L2.800 10 Q0.200 6.500 2.800 3.600 Q6 1 9 4 L10 5.200 L11 4 Q14 1 17.200 3.600 Q19.800 6.500 17.200 10 Z" fill="none" stroke="#c3c3c3" stroke-width="1.850" stroke-linejoin="round"/></svg>
<svg style="left:412.00px;top:352.50px;" width="20" height="19" viewBox="0 0 20 19"><g transform="rotate(-33 10 9.5)" fill="none" stroke="#c3c3c3" stroke-width="2"><rect x="0.800" y="6.300" width="10.800" height="6.400" rx="3.200"/><rect x="8.400" y="6.300" width="10.800" height="6.400" rx="3.200"/></g></svg>
<svg style="left:462.00px;top:359.50px;" width="18" height="5" viewBox="0 0 18 5"><circle cx="2.500" cy="2.500" r="2.100" fill="#c3c3c3"/><circle cx="9" cy="2.500" r="2.100" fill="#c3c3c3"/><circle cx="15.500" cy="2.500" r="2.100" fill="#c3c3c3"/></svg>
<svg style="left:512.70px;top:351.70px;" width="24.2" height="20.4" viewBox="0 0 21 20" preserveAspectRatio="none"><path d="M8.200 1 L0.800 7.600 L8.200 14.200 V10.300 Q15 10.300 15.500 17.500 Q17 19 18 17 Q20 6 8.200 4.900 Z" fill="#9a9a9a" transform="translate(0.5 0)"/></svg>
<div class="t" style="left:540.50px;top:352.07px;font-size:20px;color:#a0a0a0;font-weight:400;">Reply</div>
<div class="t" style="left:343.00px;top:352.07px;font-size:20px;color:#b4b4b4;font-weight:400;">1</div>
<div style="left:13.00px;top:185.00px;width:590.00px;height:1.50px;background:#e9e9e9;"></div>
<div style="left:13px;top:201.7px;width:52.6px;height:52.6px;border-radius:50%;background:#8dada3"></div>
<div class="t" style="left:29.00px;top:214.90px;font-size:29.3px;color:#e2ebe7;font-weight:400;transform:scaleX(.835);transform-origin:0 0;">R</div>
<div class="t" style="left:74.50px;top:204.12px;font-size:17.58px;color:#646464;font-weight:700;">random_user</div>
<div class="t" style="right:41.30px;top:204.12px;font-size:17.58px;color:#8f8f8f;font-weight:400;">1d</div>
<div class="t" style="left:74.50px;top:251.42px;font-size:17.58px;color:#222;font-weight:400;">Thank you very much! I will post it as soon as I make sure it works</div>
<div class="t" style="left:74.50px;top:278.42px;font-size:17.58px;color:#222;font-weight:400;">with Qubes 4.2, since I’m in the middle of upgrading right now.</div>
<div style="left:12.00px;top:403.00px;width:593.00px;height:1.50px;background:#e9e9e9;"></div>
<div class="t" style="left:-8.15px;width:80px;text-align:center;top:416.40px;font-size:20.2px;color:#3a6fd8">4.9k</div>
<div class="t" style="left:-8.15px;width:80px;text-align:center;top:439.05px;font-size:15.3px;color:#9b9b9b">views</div>
<div class="t" style="left:43.35px;width:80px;text-align:center;top:416.40px;font-size:20.2px;color:#3a6fd8">164</div>
<div class="t" style="left:43.35px;width:80px;text-align:center;top:439.05px;font-size:15.3px;color:#9b9b9b">likes</div>
<div class="t" style="left:90.50px;width:80px;text-align:center;top:416.40px;font-size:20.2px;color:#3a6fd8">14</div>
<div class="t" style="left:90.50px;width:80px;text-align:center;top:439.05px;font-size:15.3px;color:#9b9b9b">links</div>
<div class="t" style="left:139.85px;width:80px;text-align:center;top:416.40px;font-size:20.2px;color:#3a6fd8">38</div>
<div class="t" style="left:139.85px;width:80px;text-align:center;top:439.05px;font-size:15.3px;color:#9b9b9b">users</div>
<svg style="left:212px;top:416px" width="156" height="38" viewBox="856 613 156 38"><circle cx="874.4" cy="631.7" r="17" fill="#fff"/><circle cx="874.4" cy="631.7" r="16.2" fill="none" stroke="#111" stroke-width="0.9"/><circle cx="874.4" cy="631.7" r="13.4" fill="none" stroke="#222" stroke-width="3.4" stroke-dasharray="1.3 0.9"/><circle cx="874.4" cy="631.7" r="10.8" fill="#fff" stroke="#111" stroke-width="0.8"/><path d="M874.4 622.500 Q869 621.500 866.500 626 Q864.500 630.500 868.500 631.500 Q872 631.500 873.600 629 L873.600 636 Q871 638.500 867.500 639 Q872 640.500 874.400 642 Q876.800 640.500 881.300 639 Q877.800 638.500 875.200 636 L875.200 629 Q876.800 631.500 880.300 631.500 Q884.300 630.500 882.300 626 Q879.800 621.500 874.400 622.500 Z" fill="#1a1a1a"/><circle cx="870" cy="633" r="2.600" fill="#fff"/><circle cx="878.800" cy="633" r="2.600" fill="#fff"/><circle cx="913.5" cy="631.7" r="17.5" fill="#11a826"/><path d="M908.800 639.500 V624.500 L918.300 639.200 V624.200" fill="none" stroke="#d6f2d9" stroke-width="1.900" stroke-linejoin="miter"/><defs><radialGradient id="ux" cx="0.5" cy="0.2" r="0.8"><stop offset="0" stop-color="#38546f"/><stop offset="1" stop-color="#1c2a3d"/></radialGradient></defs><circle cx="953.4" cy="631.7" r="17.5" fill="url(#ux)"/><path d="M943.500 631.500 V634 H947.500 V631.500 M949.300 634.300 V631.800 H953.300 V634.300 M955 631.500 V634 H959 V631.500 M960.800 631.500 L964.800 634.300 M964.800 631.500 L960.800 634.300" fill="none" stroke="#8b9098" stroke-width="0.800"/><circle cx="993" cy="631.7" r="17.6" fill="#a6c990"/><path d="M990.200 624.200 V638.700 H997.700" fill="none" stroke="#eef6e9" stroke-width="2"/></svg>
<div class="t" style="right:176.00px;top:417.62px;font-size:17.58px;color:#646464;font-weight:400;">10 min</div>
<div class="t" style="right:176.00px;top:437.35px;font-size:15.3px;color:#8f8f8f;font-weight:400;">read</div>
<div style="left:470.00px;top:415.00px;width:134.70px;height:39.70px;background:#e9e9e9;border-radius:2px;"></div>
<svg style="left:483.00px;top:426.00px;" width="17" height="17" viewBox="0 0 17 17"><path d="M8.500 1 L16 4.500 L8.500 8 L1 4.500 Z M2.500 7.400 L8.500 10.200 L14.500 7.400 L16 8.200 L8.500 11.700 L1 8.200 Z M2.500 11 L8.500 13.800 L14.500 11 L16 11.800 L8.500 15.300 L1 11.800 Z" fill="#5f5f5f"/></svg>
<div class="t" style="left:507.70px;top:425.82px;font-size:17.58px;color:#222;font-weight:400;">Top replies</div>
<div style="left:12.00px;top:466.00px;width:593.00px;height:1.50px;background:#e9e9e9;"></div>
<div style="left:506.70px;top:467.50px;width:98.00px;height:47.50px;background:#dee7f8;"></div>
<div style="left:601.00px;top:469.00px;width:2.50px;height:45.00px;background:#f4f7fd;"></div>
<div class="t" style="left:525.30px;top:480.90px;font-size:20.2px;color:#3a6fd8;font-weight:700;">90 / 93</div>
<div style="left:12.00px;top:529.00px;width:96.70px;height:39.70px;background:#e9e9e9;border-radius:2px;"></div>
<div class="t" style="left:50.00px;top:541.72px;font-size:17.58px;color:#222;font-weight:400;">Share</div>
<svg style="left:23.00px;top:540.00px;" width="19" height="17" viewBox="0 0 20 19"><g transform="rotate(-33 10 9.5)" fill="none" stroke="#6a6a6a" stroke-width="2"><rect x="0.800" y="6.300" width="10.800" height="6.400" rx="3.200"/><rect x="8.400" y="6.300" width="10.800" height="6.400" rx="3.200"/></g></svg>
<div style="left:118.00px;top:529.00px;width:128.70px;height:39.70px;background:#e9e9e9;border-radius:2px;"></div>
<div class="t" style="left:156.00px;top:541.72px;font-size:17.58px;color:#222;font-weight:400;">Bookmark</div>
<svg style="left:131.50px;top:540.00px;" width="13" height="17" viewBox="0 0 13 17"><path d="M1 1.500 Q1 0.500 2 0.500 H11 Q12 0.500 12 1.500 V16.500 L6.500 13 L1 16.500 Z" fill="#5f5f5f"/></svg>
<div style="left:256.00px;top:529.00px;width:84.70px;height:39.70px;background:#e9e9e9;border-radius:2px;"></div>
<div class="t" style="left:294.00px;top:541.72px;font-size:17.58px;color:#222;font-weight:400;">Flag</div>
<svg style="left:269.00px;top:540.00px;" width="17" height="17" viewBox="0 0 17 17"><path d="M1.300 0.500 V16.500" stroke="#5f5f5f" stroke-width="2"/><path d="M2 1.800 Q5 0.300 8 1.800 Q11 3.300 16 1.500 V10.500 Q11 12.300 8 10.800 Q5 9.300 2 10.800 Z" fill="#5f5f5f"/></svg>
<div style="left:350.00px;top:529.00px;width:94.70px;height:39.70px;background:#3b72d9;border-radius:2px;"></div>
<div class="t" style="left:387.50px;top:541.72px;font-size:17.58px;color:#fff;font-weight:400;">Reply</div>
<svg style="left:361.50px;top:539.00px;" width="21" height="20" viewBox="0 0 21 20"><path d="M8.200 1 L0.800 7.600 L8.200 14.200 V10.300 Q15 10.300 15.500 17.500 Q17 19 18 17 Q20 6 8.200 4.900 Z" fill="#fff" transform="translate(0.5 0)"/></svg>
<div style="left:12.00px;top:587.00px;width:132.70px;height:40.70px;background:#e9e9e9;border-radius:2px;"></div>
<svg style="left:24.50px;top:597.00px;" width="17" height="20" viewBox="0 0 17 20"><path d="M8.500 1 V2.500 M8.500 2.500 Q13.200 3 13.200 8.500 Q13.200 13 15.500 15 H1.500 Q3.800 13 3.800 8.500 Q3.800 3 8.500 2.500 Z" fill="none" stroke="#5f5f5f" stroke-width="1.500" stroke-linejoin="round"/><path d="M6.500 17 Q8.500 19.500 10.500 17" fill="none" stroke="#5f5f5f" stroke-width="1.500"/></svg>
<div class="t" style="left:46.00px;top:599.12px;font-size:17.58px;color:#222;font-weight:400;">Normal</div>
<svg style="left:116.00px;top:602.00px;" width="15" height="10" viewBox="0 0 15 10"><path d="M1.500 2 L7.500 8 L13.500 2" fill="none" stroke="#5f5f5f" stroke-width="1.800"/></svg>
<div class="t" style="left:154.30px;top:587.72px;font-size:17.58px;color:#707070;font-weight:400;">You will be notified if someone mentions your @name or</div>
<div class="t" style="left:154.30px;top:611.72px;font-size:17.58px;color:#707070;font-weight:400;">replies to you.</div>
<div class="t" style="left:22.50px;top:661.30px;font-size:20.55px;color:#222;font-weight:700;">New &amp; Unread Topics</div>
<div class="t" style="left:23.50px;top:709.30px;font-size:15px;color:#919191;font-weight:400;">Topic</div>
<div class="t" style="left:435px;width:100px;text-align:center;top:709.30px;font-size:15px;color:#919191">Replies</div>
<div class="t" style="left:508px;width:100px;text-align:center;top:709.30px;font-size:15px;color:#919191">Activity</div>
<div style="left:12.00px;top:739.30px;width:593.00px;height:2.00px;background:#e9e9e9;"></div>
<div style="left:12.00px;top:836.00px;width:593.00px;height:1.30px;background:#e9e9e9;"></div>
<div style="left:12.00px;top:916.00px;width:593.00px;height:1.30px;background:#e9e9e9;"></div>
<div class="t" style="left:24.70px;top:759.12px;font-size:17.58px;color:#222;font-weight:400;">What would you like to see improved in Qubes</div>
<div class="t" style="left:24.70px;top:783.12px;font-size:17.58px;color:#222;font-weight:400;">OS?</div>
<div class="t" style="left:64.80px;top:781.20px;width:18.5px;height:18.5px;border-radius:9.3px;background:#93aee9;color:#fff;font-size:13.3px;line-height:18.5px;text-align:center">2</div>
<div style="left:25.00px;top:806.30px;width:11.00px;height:11.00px;background:#12a89d;"></div>
<div class="t" style="left:40.50px;top:806.04px;font-size:13.3px;color:#646464;font-weight:400;">General Discussion</div>
<div class="t" style="left:435px;width:100px;text-align:center;top:779.06px;font-size:17.3px;font-weight:700;color:#e9671c">446</div>
<div class="t" style="left:508px;width:100px;text-align:center;top:779.76px;font-size:17.3px;color:#9a9a9a">5d</div>
<div class="t" style="left:24.70px;top:859.12px;font-size:17.58px;color:#222;font-weight:400;">Is Qubes 4.3-rc1 useable?</div>
<div class="t" style="left:235.80px;top:857.20px;width:18.5px;height:18.5px;border-radius:9.3px;background:#93aee9;color:#fff;font-size:13.3px;line-height:18.5px;text-align:center">1</div>
<div style="left:25.00px;top:882.30px;width:11.00px;height:11.00px;background:#12a89d;"></div>
<div class="t" style="left:40.50px;top:882.04px;font-size:13.3px;color:#646464;font-weight:400;">General Discussion</div>
<div class="t" style="left:435px;width:100px;text-align:center;top:868.36px;font-size:17.3px;font-weight:700;color:#a07850">15</div>
<div class="t" style="left:508px;width:100px;text-align:center;top:869.06px;font-size:17.3px;color:#9a9a9a">Sep 18</div>
<div class="t" style="left:24.70px;top:936.42px;font-size:17.58px;color:#222;font-weight:400;">After a decade of use, I’m considering moving on from</div>
<div class="t" style="left:24.70px;top:960.42px;font-size:17.58px;color:#222;font-weight:400;">Qubes</div>
<div class="t" style="left:81.00px;top:958.50px;width:26px;height:18.5px;border-radius:9.3px;background:#93aee9;color:#fff;font-size:13.3px;line-height:18.5px;text-align:center">10</div>
<div style="left:25.00px;top:982.30px;width:11.00px;height:11.00px;background:#12a89d;"></div>
<div class="t" style="left:40.50px;top:982.04px;font-size:13.3px;color:#646464;font-weight:400;">General Discussion</div>
<div class="t" style="left:435px;width:100px;text-align:center;top:956.06px;font-size:17.3px;font-weight:700;color:#8f8f8f">25</div>
<div class="t" style="left:508px;width:100px;text-align:center;top:956.76px;font-size:17.3px;color:#9a9a9a">Sep 11</div>
<div style="left:0.00px;top:0.00px;width:617.00px;height:71.00px;background:#f5f5f5;border-bottom:1px solid #e2e2e2;box-shadow:0 1px 2px rgba(0,0,0,.08);"></div>
<div style="left:22.70px;top:23.80px;width:26.60px;height:4.00px;background:#c9c9c9;border-radius:2px;"></div>
<div style="left:22.70px;top:33.40px;width:26.60px;height:4.00px;background:#c9c9c9;border-radius:2px;"></div>
<div style="left:22.70px;top:43.00px;width:26.60px;height:4.00px;background:#c9c9c9;border-radius:2px;"></div>
<svg style="left:0;top:0" width="140" height="70" viewBox="0 0 140 70"><defs><mask id="qm2" maskUnits="userSpaceOnUse" x="0" y="0" width="140" height="70"><path d="M100.35 16.9 L116.25 26.4 L116.4 42.4 L100.35 53.9 L84.6 43.8 L84.6 26.4 Z" fill="#fff" stroke="#fff" stroke-width="5.2" stroke-linejoin="round"/><path d="M113.2 47.3 L118.6 53.3 L113 56.2 L103.5 51.2 L108 46 Z" fill="#fff" stroke="#fff" stroke-width="3" stroke-linejoin="round"/><path d="M100.35 23.75 L110.75 29.25 L110.75 41 L100.35 47 L90 41 L90 29.25 Z" fill="#000" stroke="#000" stroke-width="0.8" stroke-linejoin="round"/></mask></defs><g mask="url(#qm2)"><path d="M60 0 H140 V17 L110.75 29.25 L100.35 35 L90 29.25 L60 14.500 Z" fill="#9bc2ff"/><path d="M60 14.500 L90 29.250 L100.35 35 V70 H60 Z" fill="#82b0ff"/><path d="M140 17 L110.75 29.250 L100.35 35 V70 H140 Z" fill="#63a0ff"/></g></svg>
<div class="t" style="left:133.00px;top:13.14px;font-size:26.65px;color:#222;font-weight:700;">Share your desktop scr…</div>
<div style="left:133.00px;top:44.70px;width:11.00px;height:11.00px;background:#12a89d;"></div>
<div class="t" style="left:149.30px;top:42.55px;font-size:15.3px;color:#9a9a9a;font-weight:400;">General Discussion</div>
<svg style="left:513.00px;top:19.00px;" width="34" height="34" viewBox="0 0 34 34"><circle cx="13.800" cy="13.500" r="10.600" fill="none" stroke="#c6c6c6" stroke-width="3.400"/><path d="M21.500 21.200 L30.500 30.200" stroke="#c6c6c6" stroke-width="3.600" stroke-linecap="round"/></svg>
<div style="left:561.5px;top:16.19999999999999px;width:37px;height:37px;border-radius:50%;background:#a695b9"></div>
<div style="left:574.00px;top:26.30px;width:13.00px;height:2.70px;background:#e6e0ee;"></div>
<div style="left:579.20px;top:26.30px;width:2.60px;height:16.40px;background:#e6e0ee;"></div>
<div style="left:582.5px;top:8.800000000000011px;width:23px;height:19px;border-radius:50%;background:#0a9a10"></div>
<svg style="left:587.50px;top:14.00px;" width="12" height="10" viewBox="0 0 12 10"><rect x="0.600" y="0.600" width="10.800" height="8.500" rx="1" fill="none" stroke="#fff" stroke-width="1.300"/><path d="M0.800 1.800 L6 5.800 L11.200 1.800" fill="none" stroke="#fff" stroke-width="1.300"/></svg>
<div style="left:617.00px;top:0.00px;width:15.00px;height:996.00px;background:#fafafa;"></div>
<svg style="left:619.50px;top:6.00px;" width="10" height="6" viewBox="0 0 10 6"><path d="M0.300 5.500 L5 0.500 L9.700 5.500 Z" fill="#8a8a8a"/></svg>
<svg style="left:619.50px;top:984.50px;" width="10" height="6" viewBox="0 0 10 6"><path d="M0.300 0.500 L5 5.500 L9.700 0.500 Z" fill="#8a8a8a"/></svg>
<div style="left:620.00px;top:946.50px;width:9.00px;height:23.00px;background:#8b8b8b;border-radius:4.5px;"></div>
</div>
</div>
<!-- WINDOW 3 : thunderbird -->
<div id="w3" class="abs" style="overflow:hidden">
<div class="tb" style="left:0;top:0;width:633px;background:#a06a1a;border-color:#f0ba60;color:#35322c">[personal-chat] WhatsApp Web</div>
<div class="tb" style="left:0;top:22px;width:633px;background:#a06a1a;border-color:#f0ba60;color:#35322c">[personal-chat] #support-general | Unfolded Chat - Discord</div>
<div class="tb" style="left:0;top:44px;width:633px;background:#b87c1e;border-color:#f0ba60;color:#0c0c0c">[personal-mail] Posteingang - Gruppierte Ordner - Mozilla Thunderbird</div>
<div style="left:0;top:66px;width:633px;height:1075px;background:#1a1a1c;border:2px solid #c8861e;border-top:none"></div>
<div style="left:6.00px;top:70.00px;width:621.00px;height:1064.00px;background:#2b2b30;"></div>
<div style="left:3.00px;top:67.00px;width:3.00px;height:1070.00px;background:#252527;"></div>
<div style="left:3.00px;top:67.00px;width:627.00px;height:3.00px;background:#232325;"></div>
<div style="left:627.00px;top:70.00px;width:3.00px;height:1067.00px;background:#252527;"></div>
<div style="left:3.00px;top:1134.00px;width:627.00px;height:3.00px;background:#252527;"></div>
<div style="left:6.00px;top:70.00px;width:46.00px;height:1064.00px;background:#1f1f22;"></div>
<div style="left:52.00px;top:70.00px;width:575.00px;height:44.30px;background:#2b2b30;"></div>
<div style="left:52.00px;top:114.30px;width:575.00px;height:34.70px;background:#46464b;"></div>
<div style="left:55.00px;top:117.50px;width:187.70px;height:31.50px;background:#2a2a2e;border-radius:4px 4px 0 0;"></div>
<div style="left:58.00px;top:119.70px;width:182.00px;height:2.10px;background:#3584e4;border-radius:1px;"></div>
<div style="left:14.00px;top:78.00px;width:30.00px;height:30.00px;background:#3584e4;border-radius:4px;"></div>
<svg style="left:19.00px;top:85.00px;" width="20" height="16" viewBox="0 0 20 16"><rect x="1" y="1" width="18" height="14" rx="2.500" fill="#6aa5ee" stroke="#fff" stroke-width="1.500"/><path d="M4.500 4.500 L10 9 L15.500 4.500 M4.500 12 L8 8 M15.500 12 L12 8" fill="none" stroke="#fff" stroke-width="1.300"/></svg>
<svg style="left:20.00px;top:128.00px;" width="18" height="20" viewBox="0 0 18 20"><rect x="3" y="1.500" width="13" height="17" rx="2" fill="none" stroke="#e4e4e8" stroke-width="1.400"/><circle cx="9.500" cy="8" r="2.300" fill="none" stroke="#e4e4e8" stroke-width="1.300"/><path d="M5.500 15 Q5.500 11.500 9.500 11.500 Q13.500 11.500 13.500 15" fill="none" stroke="#e4e4e8" stroke-width="1.300"/><path d="M1.500 5 H4 M1.500 8.500 H4 M1.500 12 H4 M1.500 15.500 H4" stroke="#e4e4e8" stroke-width="1.200"/></svg>
<svg style="left:20.00px;top:174.00px;" width="18" height="18" viewBox="0 0 18 18"><rect x="1.500" y="2.500" width="15" height="14" rx="3" fill="none" stroke="#e4e4e8" stroke-width="1.400"/><path d="M1.500 6.500 H16.500 M5.500 1 V4 M12.500 1 V4" stroke="#e4e4e8" stroke-width="1.400"/><path d="M4.500 9.500 H13.500 M4.500 12 H13.500 M4.500 14.300 H13.500" stroke="#e4e4e8" stroke-width="1.300" stroke-dasharray="1.800 1.800"/></svg>
<svg style="left:21.00px;top:218.00px;" width="16" height="20" viewBox="0 0 16 20"><rect x="1.500" y="3" width="13" height="16" rx="2" fill="none" stroke="#e4e4e8" stroke-width="1.400"/><rect x="5" y="1" width="6" height="3.500" rx="1" fill="#e4e4e8"/><path d="M4.500 11.500 L7 14 L11.500 9" fill="none" stroke="#e4e4e8" stroke-width="1.400"/></svg>
<svg style="left:19.00px;top:262.50px;" width="20" height="20" viewBox="0 0 20 20"><path d="M3 1.500 H12.500 Q14.500 1.500 14.500 3.500 V8.500 Q14.500 10.500 12.500 10.500 H6 L3 13 V10.500 Q1 10.500 1 8.500 V3.500 Q1 1.500 3 1.500 Z" fill="none" stroke="#e4e4e8" stroke-width="1.400" stroke-linejoin="round"/><path d="M17 7 Q19 7.500 19 9.500 V14 Q19 16 17 16 V18.500 L14 16 H9 Q7.500 16 7 14" fill="none" stroke="#e4e4e8" stroke-width="1.400" stroke-linejoin="round"/><path d="M4.500 6 H5.500 M7.500 6 H8.500 M10.300 6 H11.300" stroke="#e4e4e8" stroke-width="1.400"/></svg>
<svg style="left:20.00px;top:1058.00px;" width="18" height="18" viewBox="0 0 18 18"><circle cx="9" cy="9" r="2.600" fill="none" stroke="#e4e4e8" stroke-width="1.400"/><path d="M7.600 1.500 H10.400 L10.900 3.800 L12.600 4.800 L14.800 4 L16.200 6.400 L14.500 8 V10 L16.200 11.600 L14.800 14 L12.600 13.200 L10.900 14.200 L10.400 16.500 H7.600 L7.100 14.200 L5.400 13.200 L3.200 14 L1.800 11.600 L3.500 10 V8 L1.800 6.400 L3.200 4 L5.400 4.800 L7.100 3.800 Z" fill="none" stroke="#e4e4e8" stroke-width="1.300" stroke-linejoin="round"/></svg>
<svg style="left:20.00px;top:1103.00px;" width="18" height="16" viewBox="0 0 18 16"><path d="M2 1.500 V14.500 M17 8 H5.500 M10 3.500 L5.500 8 L10 12.500" fill="none" stroke="#e4e4e8" stroke-width="1.500"/></svg>
<div style="left:171.80px;top:79.30px;width:225.20px;height:25.40px;background:#18181b;border:1px solid #8a8a92;border-radius:3px;"></div>
<div class="t" style="left:180.00px;top:86.80px;font-size:13px;color:#8e8e98;font-weight:400;letter-spacing:-.2px;">Suchen…</div>
<div style="left:245.00px;top:85.00px;width:31.70px;height:13.80px;background:#4b4b54;border-radius:3px;"></div>
<div class="t" style="left:248.50px;top:87.21px;font-size:11.8px;color:#f0f0f4;font-weight:700;transform:scaleX(.8);transform-origin:0 0;">CTRL</div>
<div class="t" style="left:280.50px;top:86.60px;font-size:13px;color:#9a9aa4;font-weight:400;">+</div>
<div style="left:293.00px;top:85.00px;width:12.80px;height:13.80px;background:#4b4b54;border-radius:3px;"></div>
<div class="t" style="left:296.20px;top:87.21px;font-size:11.8px;color:#f0f0f4;font-weight:700;transform:scaleX(.8);transform-origin:0 0;">K</div>
<svg style="left:377.00px;top:85.00px;" width="14" height="14" viewBox="0 0 14 14"><circle cx="5.800" cy="5.800" r="4.300" fill="none" stroke="#e4e4e8" stroke-width="1.500"/><path d="M9 9 L13 13" stroke="#e4e4e8" stroke-width="1.700"/></svg>
<svg style="left:505.30px;top:86.00px;" width="14" height="12" viewBox="0 0 14 12"><path d="M1 1.500 H13 M1 6 H13 M1 10.500 H13" stroke="#e4e4e8" stroke-width="1.200"/></svg>
<div style="left:544.00px;top:95.50px;width:8.00px;height:2.00px;background:#fff;"></div>
<div style="left:574.00px;top:88.00px;width:8.50px;height:8.50px;background:transparent;border:2px solid #fff;"></div>
<svg style="left:602.70px;top:86.70px;" width="10" height="10" viewBox="0 0 10 10"><path d="M1.200 1.200 L8.800 8.800 M8.800 1.200 L1.200 8.800" stroke="#fff" stroke-width="2"/></svg>
<svg style="left:63.80px;top:126.30px;" width="16" height="15" viewBox="0 0 16 15"><rect x="1.500" y="1.500" width="13" height="12" rx="3" fill="none" stroke="#e4e4e8" stroke-width="1.300"/><path d="M4 6 H12 M3.500 4 H12.500" stroke="#e4e4e8" stroke-width="1.100"/><path d="M1.800 8.200 H5.200 Q5.800 10.500 8 10.500 Q10.200 10.500 10.800 8.200 H14.200" fill="none" stroke="#e4e4e8" stroke-width="1.300"/></svg>
<div class="t" style="left:86.29999999999995px;top:127.36px;width:150px;overflow:hidden;font-size:13.4px;color:#ececf0;-webkit-mask-image:linear-gradient(90deg,#000 118px,transparent 150px);mask-image:linear-gradient(90deg,#000 118px,transparent 150px)">Posteingang - Gruppierte</div>
<svg style="left:252.80px;top:125.80px;" width="16" height="16" viewBox="0 0 16 16"><rect x="1.500" y="2" width="13" height="12.500" rx="3" fill="none" stroke="#e4e4e8" stroke-width="1.300"/><path d="M1.500 5.500 H14.500 M5 0.800 V3.500 M11 0.800 V3.500" stroke="#e4e4e8" stroke-width="1.300"/><path d="M4 8 H12 M4 10.200 H12 M4 12.300 H12" stroke="#e4e4e8" stroke-width="1.200" stroke-dasharray="1.500 1.500"/></svg>
<div class="t" style="left:275.20px;top:126.56px;font-size:13.4px;color:#ececf0;font-weight:400;">Kalender</div>
<svg style="left:411.30px;top:128.80px;" width="10" height="10" viewBox="0 0 10 10"><path d="M1 1 L9 9 M9 1 L1 9" stroke="#e4e4e8" stroke-width="1.400"/></svg>
<svg style="left:443.20px;top:125.80px;" width="15" height="16" viewBox="0 0 15 16"><rect x="2.500" y="1.500" width="11" height="13" rx="2" fill="none" stroke="#e4e4e8" stroke-width="1.300"/><circle cx="8" cy="6.300" r="1.800" fill="none" stroke="#e4e4e8" stroke-width="1.100"/><path d="M4.800 12 Q4.800 9.300 8 9.300 Q11.200 9.300 11.200 12" fill="none" stroke="#e4e4e8" stroke-width="1.100"/><path d="M1 4 H3 M1 7 H3 M1 10 H3 M1 12.800 H3" stroke="#e4e4e8" stroke-width="1"/></svg>
<div class="t" style="left:465.30px;top:126.73px;font-size:13.2px;color:#ececf0;font-weight:400;">Adressbuch</div>
<svg style="left:600.30px;top:128.80px;" width="10" height="10" viewBox="0 0 10 10"><path d="M1 1 L9 9 M9 1 L1 9" stroke="#e4e4e8" stroke-width="1.400"/></svg>
<div style="left:152.00px;top:149.00px;width:1.20px;height:963.00px;background:#3c3c42;"></div>
<svg style="left:59.50px;top:166.30px;" width="8" height="16" viewBox="0 0 8 16"><path d="M2 2 H6.500 V7 H2 Z" fill="#9a9aa2"/><path d="M4.500 7 V14 M2 11.500 L4.500 14 L7 11.500" fill="none" stroke="#e4e4e8" stroke-width="1.200"/></svg>
<div style="left:75.00px;top:160.20px;width:53.80px;height:28.30px;background:#3584e4;border-radius:3px;"></div>
<svg style="left:84.30px;top:169.30px;" width="10" height="10" viewBox="0 0 10 10"><path d="M5 0.500 V9.500 M0.500 5 H9.500" stroke="#fff" stroke-width="1.300"/></svg>
<div class="t" style="left:105.20000000000005px;top:168.59px;width:23px;overflow:hidden;font-size:13.6px;color:#fff">Neu</div>
<div style="left:139.00px;top:173.30px;width:1.60px;height:1.60px;background:#e8e8ea;"></div>
<div class="t" style="left:64.30px;top:207.91px;font-size:15.7px;color:#f4f4f6;font-weight:700;">Gruppierte</div>
<div class="t" style="left:64.30px;top:224.91px;font-size:15.7px;color:#f4f4f6;font-weight:700;">Ordner</div>
<svg style="left:150.20px;top:221.00px;" width="2" height="9" viewBox="0 0 2 9"><rect x="0.300" y="0" width="1.400" height="1.400" fill="#e4e4e8"/><rect x="0.300" y="3.700" width="1.400" height="1.400" fill="#e4e4e8"/><rect x="0.300" y="7.400" width="1.400" height="1.400" fill="#e4e4e8"/></svg>
<div style="left:55.00px;top:252.00px;width:2.00px;height:19.70px;background:#4a4a52;border-radius:1px;"></div>
<div style="left:58.70px;top:248.70px;width:87.00px;height:26.60px;background:#3a3a41;border:1px solid #5c5c66;border-radius:3px;"></div>
<svg style="left:63.70px;top:258.00px;" width="12" height="8" viewBox="0 0 12 8"><path d="M1 1.500 L6 6.500 L11 1.500" fill="none" stroke="#e4e4e8" stroke-width="1.300"/></svg>
<svg style="left:80.70px;top:254.50px;" width="16" height="15" viewBox="0 0 16 15"><rect x="1.500" y="1.500" width="13" height="12" rx="3" fill="none" stroke="#5aa5ee" stroke-width="1.300"/><path d="M4 6 H12 M3.500 4 H12.500" stroke="#5aa5ee" stroke-width="1.100"/><path d="M1.800 8.200 H5.200 Q5.800 10.500 8 10.500 Q10.200 10.500 10.800 8.200 H14.200" fill="none" stroke="#5aa5ee" stroke-width="1.300"/></svg>
<div class="t" style="left:104.70px;top:256.09px;width:6.5px;overflow:hidden;font-size:13.6px;color:#ececf0;font-weight:700">P</div>
<div style="left:117.00px;top:254.00px;width:21.5px;height:16px;overflow:hidden"><div class="t" style="left:0;top:0;width:21.5px;height:16px;border-radius:8px;background:#66666e;color:#fff;font-size:11px;font-weight:700;line-height:16px;text-align:center">16</div></div>
<svg style="left:94.30px;top:282.50px;" width="16" height="15" viewBox="0 0 16 15"><rect x="1.500" y="1.500" width="13" height="12" rx="3" fill="none" stroke="#5aa5ee" stroke-width="1.300"/><path d="M4 6 H12 M3.500 4 H12.500" stroke="#5aa5ee" stroke-width="1.100"/><path d="M1.800 8.200 H5.200 Q5.800 10.500 8 10.500 Q10.200 10.500 10.800 8.200 H14.200" fill="none" stroke="#5aa5ee" stroke-width="1.300"/></svg>
<svg style="left:91.80px;top:279.50px;" width="8" height="8" viewBox="0 0 8 8"><path d="M4 0 L5 3 L8 4 L5 5 L4 8 L3 5 L0 4 L3 3 Z" fill="#ffbd4f"/></svg>
<div style="left:122.70px;top:282.00px;width:16.0px;height:16px;overflow:hidden"><div class="t" style="left:0;top:0;width:16px;height:16px;border-radius:8px;background:#2e8af0;color:#fff;font-size:11px;font-weight:700;line-height:16px;text-align:center">5</div></div>
<svg style="left:94.30px;top:310.50px;" width="16" height="15" viewBox="0 0 16 15"><rect x="1.500" y="1.500" width="13" height="12" rx="3" fill="none" stroke="#5aa5ee" stroke-width="1.300"/><path d="M4 6 H12 M3.500 4 H12.500" stroke="#5aa5ee" stroke-width="1.100"/><path d="M1.800 8.200 H5.200 Q5.800 10.500 8 10.500 Q10.200 10.500 10.800 8.200 H14.200" fill="none" stroke="#5aa5ee" stroke-width="1.300"/></svg>
<div style="left:122.70px;top:310.00px;width:16.0px;height:16px;overflow:hidden"><div class="t" style="left:0;top:0;width:16px;height:16px;border-radius:8px;background:#66666e;color:#fff;font-size:11px;font-weight:700;line-height:16px;text-align:center">9</div></div>
<svg style="left:94.30px;top:338.50px;" width="16" height="15" viewBox="0 0 16 15"><rect x="1.500" y="1.500" width="13" height="12" rx="3" fill="none" stroke="#5aa5ee" stroke-width="1.300"/><path d="M4 6 H12 M3.500 4 H12.500" stroke="#5aa5ee" stroke-width="1.100"/><path d="M1.800 8.200 H5.200 Q5.800 10.500 8 10.500 Q10.200 10.500 10.800 8.200 H14.200" fill="none" stroke="#5aa5ee" stroke-width="1.300"/></svg>
<div style="left:122.70px;top:338.00px;width:16.0px;height:16px;overflow:hidden"><div class="t" style="left:0;top:0;width:16px;height:16px;border-radius:8px;background:#66666e;color:#fff;font-size:11px;font-weight:700;line-height:16px;text-align:center">2</div></div>
<svg style="left:96.70px;top:366.50px;" width="16" height="15" viewBox="0 0 16 15"><rect x="1.500" y="1.500" width="13" height="12" rx="3" fill="none" stroke="#5aa5ee" stroke-width="1.300"/><path d="M4 6 H12 M3.500 4 H12.500" stroke="#5aa5ee" stroke-width="1.100"/><path d="M1.800 8.200 H5.200 Q5.800 10.500 8 10.500 Q10.200 10.500 10.800 8.200 H14.200" fill="none" stroke="#5aa5ee" stroke-width="1.300"/></svg>
<div class="t" style="left:120.30px;top:368.09px;width:18.7px;overflow:hidden;font-size:13.6px;color:#ececf0;font-weight:400">pet</div>
<svg style="left:65.50px;top:396.00px;" width="8" height="12" viewBox="0 0 8 12"><path d="M1.500 1.500 L6.500 6 L1.500 10.500" fill="none" stroke="#e4e4e8" stroke-width="1.300"/></svg>
<svg style="left:81.80px;top:394.00px;" width="14" height="16" viewBox="0 0 14 16"><rect x="1.500" y="1.200" width="11" height="13.600" rx="2" fill="none" stroke="#b58fe6" stroke-width="1.300"/><path d="M4.300 5 H9.700 M4.300 8 H9.700 M4.300 11 H8" stroke="#b58fe6" stroke-width="1.200"/></svg>
<div class="t" style="left:104.50px;top:396.09px;width:34.5px;overflow:hidden;font-size:13.6px;color:#ececf0;font-weight:400">Ent…</div>
<svg style="left:81.80px;top:422.00px;" width="14" height="16" viewBox="0 0 14 16"><rect x="1.500" y="1.200" width="11" height="13.600" rx="1.500" fill="none" stroke="#e4e4e8" stroke-width="1.300"/><circle cx="7" cy="6" r="1.600" fill="none" stroke="#e4e4e8" stroke-width="1.100"/><path d="M4 12.500 L7 8.500 L10 12.500" fill="none" stroke="#e4e4e8" stroke-width="1.100"/></svg>
<div class="t" style="left:104.50px;top:424.09px;width:34.5px;overflow:hidden;font-size:13.6px;color:#ececf0;font-weight:400">Vor…</div>
<svg style="left:65.50px;top:452.00px;" width="8" height="12" viewBox="0 0 8 12"><path d="M1.500 1.500 L6.500 6 L1.500 10.500" fill="none" stroke="#e4e4e8" stroke-width="1.300"/></svg>
<svg style="left:80.80px;top:450.00px;" width="16" height="16" viewBox="0 0 16 16"><path d="M1.500 6.500 L14.500 1.500 L10 14.500 L7.200 9 Z M7.200 9 L14.500 1.500" fill="none" stroke="#4fcf7c" stroke-width="1.300" stroke-linejoin="round"/></svg>
<div class="t" style="left:104.50px;top:452.09px;width:34.5px;overflow:hidden;font-size:13.6px;color:#ececf0;font-weight:400">Ge…</div>
<svg style="left:65.50px;top:480.00px;" width="8" height="12" viewBox="0 0 8 12"><path d="M1.500 1.500 L6.500 6 L1.500 10.500" fill="none" stroke="#e4e4e8" stroke-width="1.300"/></svg>
<svg style="left:80.80px;top:478.00px;" width="16" height="16" viewBox="0 0 16 16"><rect x="1.500" y="1.500" width="13" height="13" rx="2.500" fill="none" stroke="#e6c79a" stroke-width="1.300"/><path d="M1.500 5 H14.500 M5 5 L8 8.500 L11 5 M8 8.500 V13" fill="none" stroke="#e6c79a" stroke-width="1.200"/></svg>
<div class="t" style="left:104.50px;top:480.09px;width:11.0px;overflow:hidden;font-size:13.6px;color:#ececf0;font-weight:700">Ar</div>
<div style="left:122.70px;top:478.00px;width:16.0px;height:16px;overflow:hidden"><div class="t" style="left:0;top:0;width:16px;height:16px;border-radius:8px;border:1.300px solid #66666e;color:#7c7c86;font-size:11px;font-weight:700;line-height:13.5px;text-align:center">1</div></div>
<svg style="left:63.60px;top:508.00px;" width="8" height="12" viewBox="0 0 8 12"><path d="M1.500 1.500 L6.500 6 L1.500 10.500" fill="none" stroke="#e4e4e8" stroke-width="1.300"/></svg>
<svg style="left:79.00px;top:506.00px;" width="13" height="16" viewBox="0 0 13 16"><path d="M6.500 1 Q7 4 9.500 6 Q12 8.500 11.500 11 Q10.800 15 6.500 15 Q2.200 15 1.500 11 Q1 8.500 3.500 6 Q4.500 8 5 8 Q4.500 4 6.500 1 Z" fill="none" stroke="#e88484" stroke-width="1.300" stroke-linejoin="round"/><path d="M6.500 15 Q4 13.500 5 11.500 Q6 10 6.500 9 Q7 10 8 11.500 Q9 13.500 6.500 15" fill="none" stroke="#e88484" stroke-width="1.100"/></svg>
<div style="left:106.00px;top:506.00px;width:33.3px;height:16px;overflow:hidden"><div class="t" style="left:0;top:0;width:36px;height:16px;border-radius:8px;border:1.300px solid #66666e;color:#7c7c86;font-size:11px;font-weight:700;line-height:13.5px;text-align:center">1829</div></div>
<svg style="left:65.50px;top:536.00px;" width="8" height="12" viewBox="0 0 8 12"><path d="M1.500 1.500 L6.500 6 L1.500 10.500" fill="none" stroke="#e4e4e8" stroke-width="1.300"/></svg>
<svg style="left:81.80px;top:534.00px;" width="14" height="16" viewBox="0 0 14 16"><path d="M1 3.500 H13 M5 3.500 V1.500 H9 V3.500 M2.500 3.500 V13 Q2.500 14.800 4.300 14.800 H9.700 Q11.500 14.800 11.500 13 V3.500 M5.300 6.500 V12 M8.700 6.500 V12" fill="none" stroke="#dcdcec" stroke-width="1.300"/></svg>
<div class="t" style="left:104.50px;top:536.09px;width:34.5px;overflow:hidden;font-size:13.6px;color:#ececf0;font-weight:400">Pap…</div>
<svg style="left:64.50px;top:564.00px;" width="8" height="12" viewBox="0 0 8 12"><path d="M1.500 1.500 L6.500 6 L1.500 10.500" fill="none" stroke="#e4e4e8" stroke-width="1.300"/></svg>
<svg style="left:79.50px;top:563.00px;clip-path:inset(0 3px 0 0);" width="17" height="14" viewBox="0 0 17 14"><path d="M12 1.500 H3 Q1.500 1.500 1.500 3 V11 Q1.500 12.500 3 12.500 H7.500" fill="none" stroke="#3f9bf5" stroke-width="1.300"/><path d="M3.500 4 L7.500 7 L3.500 10 M8.500 7 H12" fill="none" stroke="#3f9bf5" stroke-width="1.200"/><rect x="9.500" y="8.500" width="6.500" height="5" rx="1" fill="none" stroke="#3f9bf5" stroke-width="1.200"/><path d="M11 8.500 V7 Q11 5.500 12.700 5.500 Q14.500 5.500 14.500 7 V8.500" fill="none" stroke="#3f9bf5" stroke-width="1.100"/></svg>
<div style="left:109.00px;top:562.00px;width:30.0px;height:16px;overflow:hidden"><div class="t" style="left:0;top:0;width:30px;height:16px;border-radius:8px;border:1.300px solid #2e8af0;color:#2e8af0;font-size:11px;font-weight:700;line-height:13.5px;text-align:center">292</div></div>
<svg style="left:63.70px;top:594.00px;" width="12" height="8" viewBox="0 0 12 8"><path d="M1 1.500 L6 6.500 L11 1.500" fill="none" stroke="#e4e4e8" stroke-width="1.300"/></svg>
<svg style="left:80.50px;top:591.00px;" width="17" height="14" viewBox="0 0 17 14"><path d="M12 1.500 H3 Q1.500 1.500 1.500 3 V11 Q1.500 12.500 3 12.500 H7.500" fill="none" stroke="#3f9bf5" stroke-width="1.300"/><path d="M3.500 4 L7.500 7 L3.500 10 M8.500 7 H12" fill="none" stroke="#3f9bf5" stroke-width="1.200"/><rect x="9.500" y="8.500" width="6.500" height="5" rx="1" fill="none" stroke="#3f9bf5" stroke-width="1.200"/><path d="M11 8.500 V7 Q11 5.500 12.700 5.500 Q14.500 5.500 14.500 7 V8.500" fill="none" stroke="#3f9bf5" stroke-width="1.100"/></svg>
<div class="t" style="left:104.50px;top:592.09px;width:34.5px;overflow:hidden;font-size:13.6px;color:#ececf0;font-weight:700">pe…</div>
<svg style="left:96.80px;top:619.50px;" width="16" height="13" viewBox="0 0 16 13"><path d="M1.500 1.500 H6 L7.500 3.200 H14.500 V11.500 H1.500 Z" fill="#4a4636" stroke="#efe0a0" stroke-width="1.200" stroke-linejoin="round"/><path d="M1.500 4.800 H6 L7.500 3.200" fill="none" stroke="#efe0a0" stroke-width="1.100"/></svg>
<div class="t" style="left:120.50px;top:620.09px;width:18.5px;overflow:hidden;font-size:13.6px;color:#ececf0;font-weight:400">202</div>
<svg style="left:96.80px;top:647.50px;" width="16" height="13" viewBox="0 0 16 13"><path d="M1.500 1.500 H6 L7.500 3.200 H14.500 V11.500 H1.500 Z" fill="#4a4636" stroke="#efe0a0" stroke-width="1.200" stroke-linejoin="round"/><path d="M1.500 4.800 H6 L7.500 3.200" fill="none" stroke="#efe0a0" stroke-width="1.100"/></svg>
<div class="t" style="left:120.50px;top:648.09px;width:18.5px;overflow:hidden;font-size:13.6px;color:#ececf0;font-weight:400">202</div>
<svg style="left:64.50px;top:676.00px;" width="8" height="12" viewBox="0 0 8 12"><path d="M1.500 1.500 L6.500 6 L1.500 10.500" fill="none" stroke="#e4e4e8" stroke-width="1.300"/></svg>
<svg style="left:77.00px;top:675.00px;clip-path:inset(0 4px 0 0);" width="17" height="14" viewBox="0 0 17 14"><path d="M12 1.500 H3 Q1.500 1.500 1.500 3 V11 Q1.500 12.500 3 12.500 H7.500" fill="none" stroke="#3f9bf5" stroke-width="1.300"/><path d="M3.500 4 L7.500 7 L3.500 10 M8.500 7 H12" fill="none" stroke="#3f9bf5" stroke-width="1.200"/><rect x="9.500" y="8.500" width="6.500" height="5" rx="1" fill="none" stroke="#3f9bf5" stroke-width="1.200"/><path d="M11 8.500 V7 Q11 5.500 12.700 5.500 Q14.500 5.500 14.500 7 V8.500" fill="none" stroke="#3f9bf5" stroke-width="1.100"/></svg>
<div style="left:106.00px;top:674.00px;width:33.3px;height:16px;overflow:hidden"><div class="t" style="left:0;top:0;width:36px;height:16px;border-radius:8px;background:#2e8af0;color:#fff;font-size:11px;font-weight:700;line-height:16px;text-align:center">1025</div></div>
<div style="left:52.00px;top:699.00px;width:100.00px;height:1.20px;background:#3c3c42;"></div>
<div class="t" style="left:64.20px;top:705.55px;font-size:15.3px;color:#f4f4f6;font-weight:700;">Alle</div>
<div class="t" style="left:64.20px;top:722.85px;font-size:15.3px;color:#f4f4f6;font-weight:700;">Ordner</div>
<svg style="left:132.90px;top:718.50px;" width="2" height="9" viewBox="0 0 2 9"><rect x="0.300" y="0" width="1.400" height="1.400" fill="#e4e4e8"/><rect x="0.300" y="3.700" width="1.400" height="1.400" fill="#e4e4e8"/><rect x="0.300" y="7.400" width="1.400" height="1.400" fill="#e4e4e8"/></svg>
<svg style="left:64.00px;top:756.60px;" width="12" height="8" viewBox="0 0 12 8"><path d="M1 1.500 L6 6.500 L11 1.500" fill="none" stroke="#e4e4e8" stroke-width="1.300"/></svg>
<svg style="left:80.50px;top:753.60px;" width="17" height="14" viewBox="0 0 17 14"><path d="M12 1.500 H3 Q1.500 1.500 1.500 3 V11 Q1.500 12.500 3 12.500 H7.500" fill="none" stroke="#3f9bf5" stroke-width="1.300"/><path d="M3.500 4 L7.500 7 L3.500 10 M8.500 7 H12" fill="none" stroke="#3f9bf5" stroke-width="1.200"/><rect x="9.500" y="8.500" width="6.500" height="5" rx="1" fill="none" stroke="#3f9bf5" stroke-width="1.200"/><path d="M11 8.500 V7 Q11 5.500 12.700 5.500 Q14.500 5.500 14.500 7 V8.500" fill="none" stroke="#3f9bf5" stroke-width="1.100"/></svg>
<div class="t" style="left:104.00px;top:754.69px;width:35.0px;overflow:hidden;font-size:13.6px;color:#ececf0;font-weight:700">pe…</div>
<svg style="left:94.00px;top:780.70px;" width="16" height="15" viewBox="0 0 16 15"><rect x="1.500" y="1.500" width="13" height="12" rx="3" fill="none" stroke="#5aa5ee" stroke-width="1.300"/><path d="M4 6 H12 M3.500 4 H12.500" stroke="#5aa5ee" stroke-width="1.100"/><path d="M1.800 8.200 H5.200 Q5.800 10.500 8 10.500 Q10.200 10.500 10.800 8.200 H14.200" fill="none" stroke="#5aa5ee" stroke-width="1.300"/></svg>
<svg style="left:91.50px;top:777.70px;" width="8" height="8" viewBox="0 0 8 8"><path d="M4 0 L5 3 L8 4 L5 5 L4 8 L3 5 L0 4 L3 3 Z" fill="#ffbd4f"/></svg>
<div style="left:122.80px;top:780.20px;width:16.0px;height:16px;overflow:hidden"><div class="t" style="left:0;top:0;width:16px;height:16px;border-radius:8px;background:#2e8af0;color:#fff;font-size:11px;font-weight:700;line-height:16px;text-align:center">5</div></div>
<svg style="left:97.80px;top:808.00px;" width="14" height="16" viewBox="0 0 14 16"><rect x="1.500" y="1.200" width="11" height="13.600" rx="2" fill="none" stroke="#b58fe6" stroke-width="1.300"/><path d="M4.300 5 H9.700 M4.300 8 H9.700 M4.300 11 H8" stroke="#b58fe6" stroke-width="1.200"/></svg>
<div class="t" style="left:120.50px;top:810.09px;width:18.5px;overflow:hidden;font-size:13.6px;color:#ececf0;font-weight:400">Entw</div>
<svg style="left:96.80px;top:836.00px;" width="16" height="16" viewBox="0 0 16 16"><path d="M1.500 6.500 L14.500 1.500 L10 14.500 L7.200 9 Z M7.200 9 L14.500 1.500" fill="none" stroke="#4fcf7c" stroke-width="1.300" stroke-linejoin="round"/></svg>
<div class="t" style="left:120.50px;top:838.09px;width:18.5px;overflow:hidden;font-size:13.6px;color:#ececf0;font-weight:400">Ges</div>
<svg style="left:81.70px;top:866.40px;" width="8" height="12" viewBox="0 0 8 12"><path d="M1.500 1.500 L6.500 6 L1.500 10.500" fill="none" stroke="#e4e4e8" stroke-width="1.300"/></svg>
<svg style="left:96.80px;top:864.40px;" width="16" height="16" viewBox="0 0 16 16"><rect x="1.500" y="1.500" width="13" height="13" rx="2.500" fill="none" stroke="#e6c79a" stroke-width="1.300"/><path d="M1.500 5 H14.500 M5 5 L8 8.500 L11 5 M8 8.500 V13" fill="none" stroke="#e6c79a" stroke-width="1.200"/></svg>
<div class="t" style="left:120.50px;top:866.49px;width:18.5px;overflow:hidden;font-size:13.6px;color:#ececf0;font-weight:400">Arc</div>
<svg style="left:95.50px;top:892.40px;" width="13" height="16" viewBox="0 0 13 16"><path d="M6.500 1 Q7 4 9.500 6 Q12 8.500 11.500 11 Q10.800 15 6.500 15 Q2.200 15 1.500 11 Q1 8.500 3.500 6 Q4.500 8 5 8 Q4.500 4 6.500 1 Z" fill="none" stroke="#e88484" stroke-width="1.300" stroke-linejoin="round"/><path d="M6.500 15 Q4 13.500 5 11.500 Q6 10 6.500 9 Q7 10 8 11.500 Q9 13.500 6.500 15" fill="none" stroke="#e88484" stroke-width="1.100"/></svg>
<div style="left:122.80px;top:892.40px;width:16.0px;height:16px;overflow:hidden"><div class="t" style="left:0;top:0;width:16px;height:16px;border-radius:8px;background:#66666e;color:#fff;font-size:11px;font-weight:700;line-height:16px;text-align:center">5</div></div>
<svg style="left:97.80px;top:920.30px;" width="14" height="16" viewBox="0 0 14 16"><path d="M1 3.500 H13 M5 3.500 V1.500 H9 V3.500 M2.500 3.500 V13 Q2.500 14.800 4.300 14.800 H9.700 Q11.500 14.800 11.500 13 V3.500 M5.300 6.500 V12 M8.700 6.500 V12" fill="none" stroke="#dcdcec" stroke-width="1.300"/></svg>
<div class="t" style="left:120.50px;top:922.39px;width:18.5px;overflow:hidden;font-size:13.6px;color:#ececf0;font-weight:400">Pap</div>
<svg style="left:96.80px;top:950.10px;" width="16" height="13" viewBox="0 0 16 13"><path d="M1.500 1.500 H6 L7.500 3.200 H14.500 V11.500 H1.500 Z" fill="#4a4636" stroke="#efe0a0" stroke-width="1.200" stroke-linejoin="round"/><path d="M1.500 4.800 H6 L7.500 3.200" fill="none" stroke="#efe0a0" stroke-width="1.100"/></svg>
<div class="t" style="left:120.50px;top:950.69px;width:18.5px;overflow:hidden;font-size:13.6px;color:#ececf0;font-weight:400">Qu</div>
<svg style="left:90.50px;top:977.70px;clip-path:inset(0 0 0 5px);" width="16" height="13" viewBox="0 0 16 13"><path d="M1.500 1.500 H6 L7.500 3.200 H14.500 V11.500 H1.500 Z" fill="#4a4636" stroke="#efe0a0" stroke-width="1.200" stroke-linejoin="round"/><path d="M1.500 4.800 H6 L7.500 3.200" fill="none" stroke="#efe0a0" stroke-width="1.100"/></svg>
<svg style="left:89.50px;top:974.20px;" width="8" height="8" viewBox="0 0 8 8"><path d="M4 0 L5 3 L8 4 L5 5 L4 8 L3 5 L0 4 L3 3 Z" fill="#ffbd4f"/></svg>
<div style="left:116.00px;top:976.20px;width:23.3px;height:16px;overflow:hidden"><div class="t" style="left:0;top:0;width:24px;height:16px;border-radius:8px;background:#2e8af0;color:#fff;font-size:11px;font-weight:700;line-height:16px;text-align:center">275</div></div>
<svg style="left:94.00px;top:1005.50px;" width="16" height="13" viewBox="0 0 16 13"><path d="M1.500 1.500 H6 L7.500 3.200 H14.500 V11.500 H1.500 Z" fill="#4a4636" stroke="#efe0a0" stroke-width="1.200" stroke-linejoin="round"/><path d="M1.500 4.800 H6 L7.500 3.200" fill="none" stroke="#efe0a0" stroke-width="1.100"/></svg>
<div style="left:122.80px;top:1004.00px;width:16.0px;height:16px;overflow:hidden"><div class="t" style="left:0;top:0;width:16px;height:16px;border-radius:8px;background:#66666e;color:#fff;font-size:11px;font-weight:700;line-height:16px;text-align:center">5</div></div>
<svg style="left:64.00px;top:1036.80px;" width="12" height="8" viewBox="0 0 12 8"><path d="M1 1.500 L6 6.500 L11 1.500" fill="none" stroke="#e4e4e8" stroke-width="1.300"/></svg>
<svg style="left:80.50px;top:1033.80px;" width="17" height="14" viewBox="0 0 17 14"><path d="M12 1.500 H3 Q1.500 1.500 1.500 3 V11 Q1.500 12.500 3 12.500 H7.500" fill="none" stroke="#3f9bf5" stroke-width="1.300"/><path d="M3.500 4 L7.500 7 L3.500 10 M8.500 7 H12" fill="none" stroke="#3f9bf5" stroke-width="1.200"/><rect x="9.500" y="8.500" width="6.500" height="5" rx="1" fill="none" stroke="#3f9bf5" stroke-width="1.200"/><path d="M11 8.500 V7 Q11 5.500 12.700 5.500 Q14.500 5.500 14.500 7 V8.500" fill="none" stroke="#3f9bf5" stroke-width="1.100"/></svg>
<div class="t" style="left:104.00px;top:1034.89px;width:35.0px;overflow:hidden;font-size:13.6px;color:#ececf0;font-weight:700">pe…</div>
<svg style="left:94.00px;top:1060.50px;" width="16" height="15" viewBox="0 0 16 15"><rect x="1.500" y="1.500" width="13" height="12" rx="3" fill="none" stroke="#5aa5ee" stroke-width="1.300"/><path d="M4 6 H12 M3.500 4 H12.500" stroke="#5aa5ee" stroke-width="1.100"/><path d="M1.800 8.200 H5.200 Q5.800 10.500 8 10.500 Q10.200 10.500 10.800 8.200 H14.200" fill="none" stroke="#5aa5ee" stroke-width="1.300"/></svg>
<div style="left:122.80px;top:1060.00px;width:16.0px;height:16px;overflow:hidden"><div class="t" style="left:0;top:0;width:16px;height:16px;border-radius:8px;background:#66666e;color:#fff;font-size:11px;font-weight:700;line-height:16px;text-align:center">9</div></div>
<svg style="left:97.80px;top:1088.30px;" width="14" height="16" viewBox="0 0 14 16"><rect x="1.500" y="1.200" width="11" height="13.600" rx="2" fill="none" stroke="#b58fe6" stroke-width="1.300"/><path d="M4.300 5 H9.700 M4.300 8 H9.700 M4.300 11 H8" stroke="#b58fe6" stroke-width="1.200"/></svg>
<div class="t" style="left:120.50px;top:1090.39px;width:18.5px;overflow:hidden;font-size:13.6px;color:#ececf0;font-weight:400">Entw</div>
<div style="left:453.30px;top:149.00px;width:1.20px;height:963.00px;background:#3c3c42;"></div>
<div class="t" style="left:159.30px;top:159.93px;font-size:15.8px;color:#f4f4f6;font-weight:700;">Post…</div>
<div class="t" style="left:227.70px;top:161.83px;font-size:13.55px;color:#ececf0;font-weight:400;">23 Nachrichten</div>
<div style="left:328.70px;top:155.00px;width:85.30px;height:27.70px;background:#38383e;border:1px solid #5c5c66;border-radius:3px;"></div>
<div style="left:334.00px;top:162.00px;width:3.70px;height:13.00px;background:#3584e4;border-radius:1px;"></div>
<svg style="left:342.70px;top:161.50px;" width="14" height="14" viewBox="0 0 14 14"><path d="M2.500 1 V13 M7 1 V13 M11.500 1 V13" stroke="#e4e4e8" stroke-width="1.200"/><circle cx="2.500" cy="9" r="1.700" fill="#2b2b30" stroke="#e4e4e8" stroke-width="1.100"/><circle cx="7" cy="4.500" r="1.700" fill="#2b2b30" stroke="#e4e4e8" stroke-width="1.100"/><circle cx="11.500" cy="9.500" r="1.700" fill="#2b2b30" stroke="#e4e4e8" stroke-width="1.100"/></svg>
<div class="t" style="left:363.70px;top:161.77px;font-size:13.5px;color:#ececf0;font-weight:400;">Sch…</div>
<svg style="left:425.00px;top:161.30px;" width="14" height="14" viewBox="0 0 14 14"><path d="M1 2 H13 M1 12 H13" stroke="#e4e4e8" stroke-width="1.300"/><rect x="1.600" y="5" width="7" height="4" fill="none" stroke="#e4e4e8" stroke-width="1.200"/><path d="M11.500 4 V10" stroke="#e4e4e8" stroke-width="1.300"/></svg>
<div style="left:153.20px;top:185.70px;width:300.10px;height:1.20px;background:#3c3c42;"></div>
<div style="left:159.20px;top:193.20px;width:35.50px;height:29.10px;background:#45454d;border:1px solid #55555e;border-radius:3px;"></div>
<div style="left:165.20px;top:201.80px;width:3.60px;height:11.70px;background:#3584e4;border-radius:1px;"></div>
<svg style="left:173.50px;top:201.00px;" width="14" height="14" viewBox="0 0 14 14"><path d="M8.500 1.500 L12.500 5.500 L10.800 6 L8.800 8.800 L9 11 L3 5 L5.200 5.200 L8 3.200 Z M5.800 8.200 L1.500 12.500" fill="none" stroke="#e4e4e8" stroke-width="1.200" stroke-linejoin="round"/></svg>
<div style="left:201.00px;top:193.20px;width:210.30px;height:29.10px;background:#18181b;border:1px solid #74747e;border-radius:3px;"></div>
<div class="t" style="left:209.30px;top:201.33px;font-size:13.55px;color:#8a8a94;font-weight:400;">Nachrichten filtern…</div>
<div style="left:342.30px;top:202.70px;width:31.40px;height:13.30px;background:#4b4b54;border-radius:3px;"></div>
<div class="t" style="left:345.60px;top:204.51px;font-size:11.8px;color:#f0f0f4;font-weight:700;transform:scaleX(.8);transform-origin:0 0;">STRG</div>
<div style="left:378.50px;top:208.50px;width:3.00px;height:1.20px;background:#8a8a94;"></div>
<svg style="left:391.00px;top:201.00px;" width="14" height="14" viewBox="0 0 14 14"><circle cx="5.800" cy="5.800" r="4.300" fill="none" stroke="#e4e4e8" stroke-width="1.500"/><path d="M9 9 L13 13" stroke="#e4e4e8" stroke-width="1.700"/></svg>
<svg style="left:425.00px;top:201.00px;" width="14" height="14" viewBox="0 0 14 14"><path d="M2.500 1 V13 M7 1 V13 M11.500 1 V13" stroke="#e4e4e8" stroke-width="1.200"/><circle cx="2.500" cy="9" r="1.700" fill="#2b2b30" stroke="#e4e4e8" stroke-width="1.100"/><circle cx="7" cy="4.500" r="1.700" fill="#2b2b30" stroke="#e4e4e8" stroke-width="1.100"/><circle cx="11.500" cy="9.500" r="1.700" fill="#2b2b30" stroke="#e4e4e8" stroke-width="1.100"/></svg>
<div class="t" style="left:159.30px;top:230.53px;font-size:13.55px;color:#ececf0;font-weight:400;">23 Nachrichten</div>
<div style="left:554.70px;top:156.70px;width:78.30px;height:22.60px;background:transparent;border:1px solid #5c5c66;border-radius:3px;"></div>
<svg style="left:561.00px;top:162.50px;" width="13" height="11" viewBox="0 0 13 11"><path d="M5.500 1 L1.500 5 L5.500 9 M1.500 5 H8 Q12 5 12 10" fill="none" stroke="#e4e4e8" stroke-width="1.200"/><path d="M8.500 1 L5 5 L8.500 9" fill="none" stroke="#e4e4e8" stroke-width="1"/></svg>
<div class="t" style="left:578.30px;top:162.37px;font-size:13.5px;color:#ececf0;font-weight:400;">Antwort</div>
<div style="left:515.70px;top:183.70px;width:95.60px;height:23.00px;background:transparent;border:1px solid #5c5c66;border-radius:3px;"></div>
<svg style="left:521.30px;top:188.20px;" width="14" height="14" viewBox="0 0 14 14"><rect x="1" y="1" width="12" height="12" rx="2.500" fill="none" stroke="#e4e4e8" stroke-width="1.200"/><path d="M1 4.500 H13 M4.500 4.500 L7 7.500 L9.500 4.500 M7 7.500 V11.500" fill="none" stroke="#e4e4e8" stroke-width="1.100"/></svg>
<div class="t" style="left:539.70px;top:189.37px;font-size:13.5px;color:#ececf0;font-weight:400;">Archivieren</div>
<div style="left:615.30px;top:183.70px;width:27.70px;height:23.00px;background:transparent;border:1px solid #5c5c66;border-radius:3px;"></div>
<svg style="left:620.50px;top:189.20px;" width="8" height="12" viewBox="0 0 8 12"><path d="M7 1 Q1 6 7 11" fill="none" stroke="#e4e4e8" stroke-width="1.300"/></svg>
<div style="left:153.20px;top:251.00px;width:9.10px;height:861.00px;background:#000;"></div>
<div style="left:154.90px;top:542.50px;width:4.10px;height:50.90px;background:#55555c;border-radius:2px;"></div>
<div style="left:162.20px;top:1110.00px;width:291.30px;height:2.30px;background:#000;"></div>
<div style="left:162.20px;top:235.70px;width:466.00px;height:874.30px;background:#ff0000;"></div>
<div style="left:52.00px;top:1112.30px;width:575.00px;height:21.70px;background:#2b2b30;"></div>
<div style="left:52.00px;top:1112.30px;width:110.00px;height:1.00px;background:#3c3c42;"></div>
<div style="left:453.50px;top:1112.30px;width:173.50px;height:1.00px;background:#3c3c42;"></div>
<svg style="left:57.80px;top:1117.50px;" width="16" height="12" viewBox="0 0 16 12"><circle cx="8" cy="6" r="1.500" fill="none" stroke="#e4e4e8" stroke-width="1.100"/><path d="M5 2.500 Q3 6 5 9.500 M11 2.500 Q13 6 11 9.500 M2.500 0.800 Q-0.500 6 2.500 11.200 M13.500 0.800 Q16.500 6 13.500 11.200" fill="none" stroke="#e4e4e8" stroke-width="1.100"/></svg>
<svg style="left:520.50px;top:1115.50px;" width="17" height="17" viewBox="0 0 17 17"><rect x="1" y="1.500" width="15" height="14.500" rx="2.500" fill="none" stroke="#e4e4e8" stroke-width="1.200"/><path d="M1 5 H16 M5 3 V5 M12 3 V5" stroke="#e4e4e8" stroke-width="1"/><text x="8.500" y="14" text-anchor="middle" font-family="Liberation Sans" font-weight="700" font-size="8.500" fill="#e4e4e8">23</text></svg>
<div class="t" style="left:542.40px;top:1118.00px;font-size:13px;color:#ececf0;font-weight:400;letter-spacing:-.1px;">Tagesplan</div>
<svg style="left:607.00px;top:1120.00px;" width="12" height="8" viewBox="0 0 12 8"><path d="M1 6.500 L6 1.500 L11 6.500" fill="none" stroke="#e4e4e8" stroke-width="1.300"/></svg>
<div style="left:626.60px;top:66.00px;width:4.40px;height:1071.00px;background:#232325;"></div>
<div style="left:626.60px;top:70.00px;width:0.80px;height:1064.00px;background:#38383c;"></div>
<div style="left:162.20px;top:235.70px;width:466.00px;height:874.30px;background:#ff0000;"></div>
<div style="left:631.00px;top:66.00px;width:2.00px;height:1075.00px;background:#c8861e;"></div>
</div>
</body></html>
